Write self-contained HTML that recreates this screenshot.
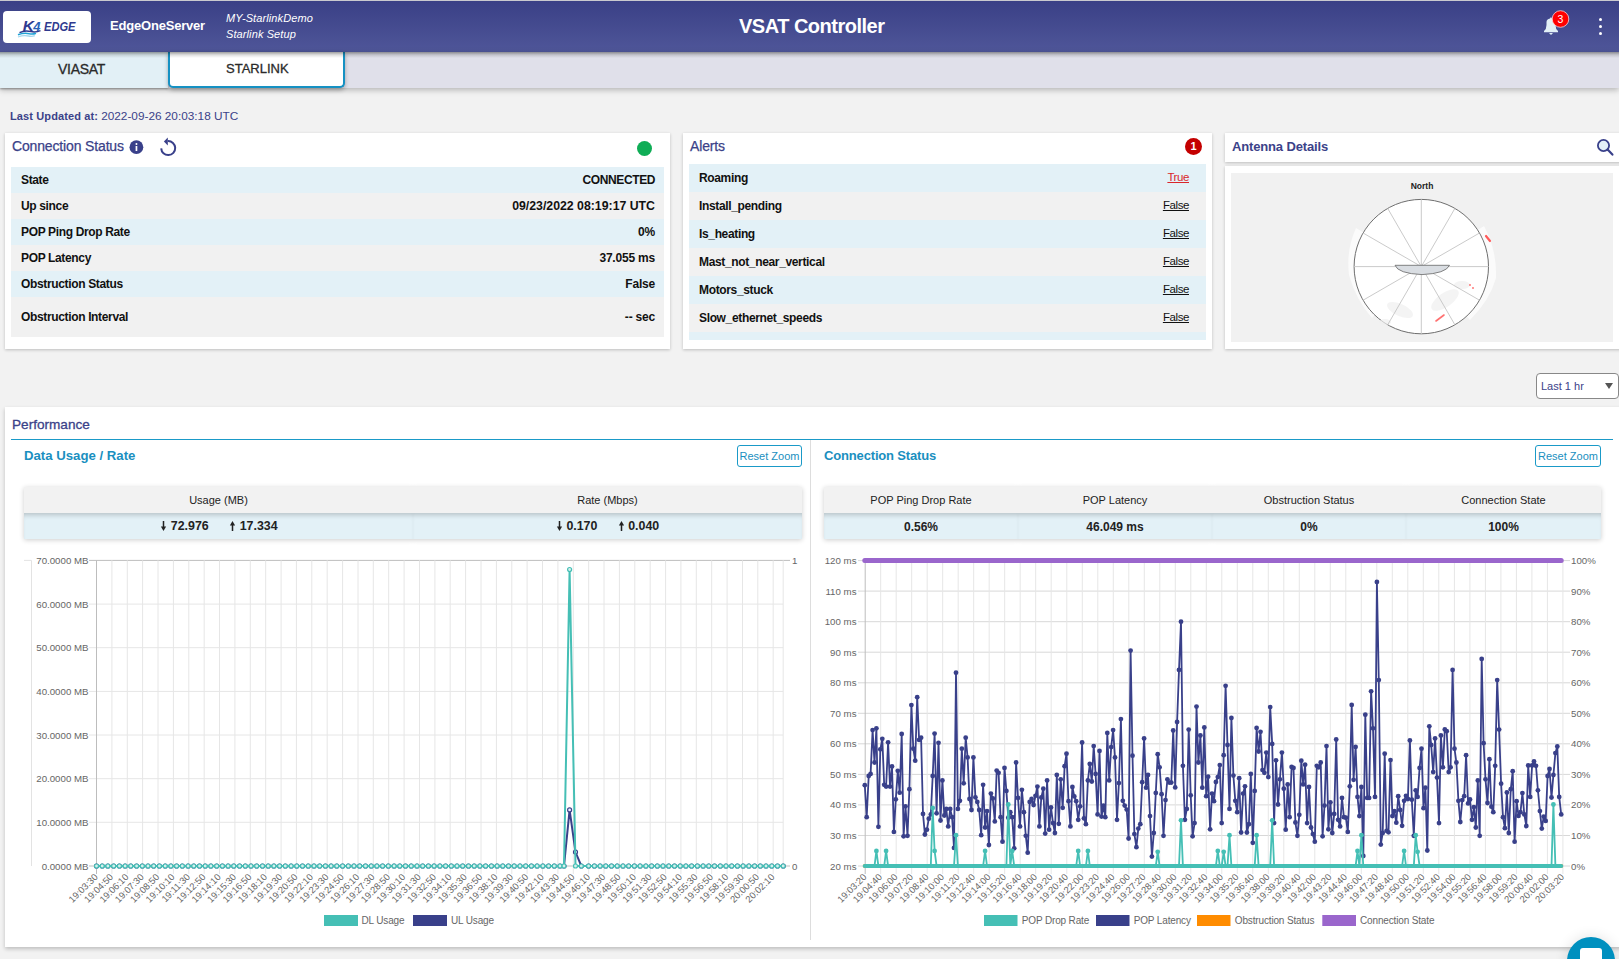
<!DOCTYPE html>
<html><head><meta charset="utf-8">
<style>
*{box-sizing:border-box;margin:0;padding:0}
html,body{width:1619px;height:959px;overflow:hidden;background:#f2f2f2;font-family:"Liberation Sans",sans-serif;position:relative}
.abs{position:absolute}
.t{position:absolute;white-space:nowrap;line-height:1}
#topline{left:0;top:0;width:1619px;height:1px;background:#c9c9cf}
#header{left:0;top:1px;width:1619px;height:51px;background:linear-gradient(#3a4086,#4f5699);}
#logo{left:3px;top:11px;width:88px;height:32px;background:#fff;border-radius:4px}
#tabbar{left:0;top:52px;width:1619px;height:36px;background:#e0e0ea;box-shadow:0 2px 6px rgba(0,0,0,.26)}
#tab1{left:0;top:52px;width:168px;height:36px;background:#e2f0f6;box-shadow:0 1px 2px rgba(0,0,0,.35)}
#tab2{left:168px;top:52px;width:177px;height:36px;background:#fff;border:2px solid #1591c3;border-top:none;border-radius:0 0 5px 5px;box-shadow:0 2px 4px rgba(0,0,0,.3)}
.panel{position:absolute;background:#fff;box-shadow:0 1px 3px rgba(0,0,0,.22)}
.row{position:absolute;left:0;width:100%}
.blue{background:#e3f1f7}
.gray{background:#f1f1f1}
.lbl{position:absolute;left:10px;font-weight:bold;font-size:12px;color:#111;white-space:nowrap;line-height:1;letter-spacing:-0.35px}
.val{position:absolute;right:9px;font-weight:bold;font-size:12px;color:#111;white-space:nowrap;line-height:1;letter-spacing:-0.2px}
.ptitle{position:absolute;font-size:14px;color:#3b4289;white-space:nowrap;line-height:1;letter-spacing:-0.15px;-webkit-text-stroke:0.25px #3b4289}
.link{position:absolute;right:17px;font-size:11.5px;color:#111;text-decoration:underline;white-space:nowrap;line-height:1;letter-spacing:-0.4px}
.sumh{position:absolute;background:#f2f2f2;font-size:11px;color:#222;text-align:center;line-height:1}
.sumv{position:absolute;background:#e3f1f7;font-size:12px;color:#222;font-weight:bold;text-align:center;line-height:1;box-shadow:inset 0 5px 5px -3px rgba(0,0,0,.2)}
.sv{font-size:12.4px;font-weight:bold;color:#222}
.rz{position:absolute;border:1px solid #1a9ac8;border-radius:3px;color:#1a8fc0;font-size:11px;text-align:center;line-height:20px;background:#fff}
svg text.ax{font-family:"Liberation Sans",sans-serif;font-size:9.7px;fill:#666}
svg text.lg{font-family:"Liberation Sans",sans-serif;font-size:10px;fill:#666;letter-spacing:-0.15px}
svg text.xl{font-family:"Liberation Sans",sans-serif;font-size:9.4px;fill:#666}
</style></head><body>
<div id="topline" class="abs"></div>
<div id="header" class="abs"></div>
<div id="logo" class="abs"></div>
<div class="t" style="left:110px;top:19px;font-size:13px;font-weight:bold;color:#fff;letter-spacing:-0.2px">EdgeOneServer</div>
<div class="t" style="left:226px;top:13px;font-size:11px;font-style:italic;color:#fff;letter-spacing:0.1px">MY-StarlinkDemo</div>
<div class="t" style="left:226px;top:29px;font-size:11px;font-style:italic;color:#fff;letter-spacing:0.1px">Starlink Setup</div>
<div class="t" style="left:739px;top:16px;font-size:20px;font-weight:bold;color:#fff;letter-spacing:-0.5px">VSAT Controller</div>

<div id="tabbar" class="abs"></div>
<div id="tab1" class="abs"></div>
<div id="tab2" class="abs"></div>
<div class="abs" style="left:0;top:52px;width:1619px;height:6px;background:linear-gradient(rgba(0,0,0,.38),rgba(0,0,0,.12) 50%,rgba(0,0,0,0))"></div>
<div class="t" style="left:58px;top:61.5px;font-size:14px;letter-spacing:-0.3px;color:#2a2a2a;-webkit-text-stroke:0.3px #2a2a2a">VIASAT</div>
<div class="t" style="left:226px;top:61.5px;font-size:13px;color:#2a2a2a;-webkit-text-stroke:0.3px #2a2a2a">STARLINK</div>

<div class="t" style="left:10px;top:111px;font-size:11px;color:#3b4289"><b style="letter-spacing:0.12px">Last Updated at:</b> <span style="font-size:11.8px">2022-09-26 20:03:18 UTC</span></div>

<!-- Connection status panel -->
<div class="panel" style="left:5px;top:133px;width:665px;height:216px">
  <div class="ptitle" style="left:7px;top:6px">Connection Status</div>
  <div class="abs" style="left:6px;top:34px;width:653px;height:169px">
    <div class="row blue" style="top:0;height:26px"><div class="lbl" style="top:7px">State</div><div class="val" style="top:7px;letter-spacing:-0.4px">CONNECTED</div></div>
    <div class="row gray" style="top:26px;height:26px"><div class="lbl" style="top:7px">Up since</div><div class="val" style="top:7px;font-size:12.3px;letter-spacing:0px">09/23/2022 08:19:17 UTC</div></div>
    <div class="row blue" style="top:52px;height:26px"><div class="lbl" style="top:7px">POP Ping Drop Rate</div><div class="val" style="top:7px">0%</div></div>
    <div class="row gray" style="top:78px;height:26px"><div class="lbl" style="top:7px">POP Latency</div><div class="val" style="top:7px">37.055 ms</div></div>
    <div class="row blue" style="top:104px;height:26px"><div class="lbl" style="top:7px">Obstruction Status</div><div class="val" style="top:7px">False</div></div>
    <div class="row gray" style="top:130px;height:40px"><div class="lbl" style="top:14px">Obstruction Interval</div><div class="val" style="top:14px">-- sec</div></div>
  </div>
</div>

<!-- Alerts panel -->
<div class="panel" style="left:683px;top:133px;width:529px;height:216px">
  <div class="ptitle" style="left:7px;top:6px">Alerts</div>
  <div class="abs" style="left:6px;top:31px;width:517px;height:176px">
    <div class="row blue" style="top:0;height:28px"><div class="lbl" style="top:8px">Roaming</div><div class="link" style="top:8px;color:#d9262b">True</div></div>
    <div class="row gray" style="top:28px;height:28px"><div class="lbl" style="top:8px">Install_pending</div><div class="link" style="top:8px">False</div></div>
    <div class="row blue" style="top:56px;height:28px"><div class="lbl" style="top:8px">Is_heating</div><div class="link" style="top:8px">False</div></div>
    <div class="row gray" style="top:84px;height:28px"><div class="lbl" style="top:8px">Mast_not_near_vertical</div><div class="link" style="top:8px">False</div></div>
    <div class="row blue" style="top:112px;height:28px"><div class="lbl" style="top:8px">Motors_stuck</div><div class="link" style="top:8px">False</div></div>
    <div class="row gray" style="top:140px;height:28px"><div class="lbl" style="top:8px">Slow_ethernet_speeds</div><div class="link" style="top:8px">False</div></div>
    <div class="row blue" style="top:168px;height:8px"></div>
  </div>
</div>

<!-- Antenna -->
<div class="panel" style="left:1225px;top:133px;width:400px;height:29px">
  <div class="ptitle" style="left:7px;top:7px;font-weight:bold;font-size:13px;-webkit-text-stroke:0">Antenna Details</div>
</div>
<div class="panel" style="left:1225px;top:166px;width:400px;height:183px">
  <div class="abs" style="left:6px;top:7px;width:382px;height:169px;background:#f1f1f1"></div>
</div>

<!-- dropdown -->
<div class="abs" style="left:1536px;top:373px;width:83px;height:26px;border:1px solid #888;border-radius:4px;background:#fff"></div>
<div class="t" style="left:1541px;top:381px;font-size:11px;color:#3b4289">Last 1 hr</div>

<!-- Performance -->
<div class="panel" style="left:5px;top:407px;width:1625px;height:540px;box-shadow:0 2px 4px rgba(0,0,0,.22)">
  <div class="t" style="left:7px;top:10.5px;font-size:13.6px;color:#3b4289;-webkit-text-stroke:0.3px #3b4289">Performance</div>
  <div class="abs" style="left:6px;top:32px;width:1602px;height:1px;background:#1a9ac8"></div>
  <div class="abs" style="left:805px;top:33px;width:1px;height:500px;background:#ddd"></div>
  <div class="t" style="left:19px;top:42px;font-size:13.2px;font-weight:bold;color:#1a8fc0">Data Usage / Rate</div>
  <div class="t" style="left:819px;top:42px;font-size:13px;letter-spacing:-0.16px;font-weight:bold;color:#1a8fc0">Connection Status</div>
</div>
<div class="rz" style="left:737px;top:445px;width:65px;height:22px">Reset Zoom</div>
<div class="rz" style="left:1535px;top:445px;width:66px;height:22px">Reset Zoom</div>


<!-- logo -->
<svg class="abs" style="left:3px;top:11px" width="88" height="32" viewBox="0 0 88 32">
  <text x="19.8" y="20.3" font-family="Liberation Sans" font-weight="bold" font-style="italic" font-size="15.5" fill="#2f3a8f" letter-spacing="-1.5">K</text>
  <text x="30.2" y="19.8" font-family="Liberation Sans" font-weight="bold" font-style="italic" font-size="13" fill="#2a64b8">4</text>
  <g transform="translate(41,19.6) scale(0.87,1)"><text x="0" y="0" font-family="Liberation Sans" font-weight="bold" font-style="italic" font-size="12.8" fill="#2f3a8f">EDGE</text></g>
  <path d="M16.5 21.6 Q22 19 28 20.6 Q33 21.6 37.5 19.6" fill="none" stroke="#2f3a8f" stroke-width="1.5"/>
  <path d="M15 23.8 Q21 21.4 26.5 22.8 Q30 23.6 33 22.2" fill="none" stroke="#1fa3d6" stroke-width="1.5"/>
  <path d="M15 26 Q20.5 23.8 25.5 25 Q29 25.8 31.8 24.6" fill="none" stroke="#a5d8ee" stroke-width="1.3"/>
</svg>
<!-- bell -->
<svg class="abs" style="left:1540px;top:8px" width="30" height="30" viewBox="0 0 30 30">
  <path d="M4 24.2 L18 24.2 L18 23 Q15.5 21 15.5 17 L15.5 14 Q15.5 11.5 12 10.6 L11 9 L10 10.6 Q6.5 11.5 6.5 14 L6.5 17 Q6.5 21 4 23 Z" fill="#e2f0f6"/>
  <path d="M9 25 L13 25 L11 27 Z" fill="#e2f0f6"/>
  <circle cx="20.5" cy="11" r="8.3" fill="#f00" stroke="#ffd0d0" stroke-width="0.8"/>
  <text x="20.5" y="14.6" text-anchor="middle" font-family="Liberation Sans" font-size="10.5" fill="#fff">3</text>
</svg>
<div class="abs" style="left:1598.7px;top:17.8px;width:3.6px;height:3.6px;border-radius:50%;background:#fff"></div>
<div class="abs" style="left:1598.7px;top:24.6px;width:3.6px;height:3.6px;border-radius:50%;background:#fff"></div>
<div class="abs" style="left:1598.7px;top:31.5px;width:3.6px;height:3.6px;border-radius:50%;background:#fff"></div>
<!-- info / refresh / dot -->
<svg class="abs" style="left:120px;top:135px" width="70" height="25" viewBox="0 0 70 25">
  <circle cx="16.4" cy="12.2" r="6.9" fill="#39408a"/>
  <rect x="15.6" y="11" width="1.7" height="5" fill="#fff"/>
  <circle cx="16.45" cy="9" r="1" fill="#fff"/>
  <path d="M41.2 13.4 A7 7 0 1 0 47.9 6.1" fill="none" stroke="#39408a" stroke-width="2"/>
  <path d="M43.9 6.5 L47.8 2.4 L47.8 10.6 Z" fill="#39408a"/>
</svg>
<div class="abs" style="left:637px;top:140.5px;width:15px;height:15px;border-radius:50%;background:#0fad56"></div>
<!-- alerts badge -->
<div class="abs" style="left:1185px;top:138.3px;width:17.2px;height:17.2px;border-radius:50%;background:#c40000;color:#fff;font-size:11px;font-weight:bold;text-align:center;line-height:17px">1</div>
<!-- search -->
<svg class="abs" style="left:1594px;top:136px" width="22" height="22" viewBox="0 0 22 22">
  <circle cx="9.5" cy="9.5" r="5.6" fill="#e4f0f8" stroke="#39408a" stroke-width="1.8"/>
  <path d="M13.6 13.6 L18.4 18.6" stroke="#39408a" stroke-width="2.2" stroke-linecap="round"/>
</svg>
<!-- dropdown triangle -->
<div class="abs" style="left:1605px;top:383px;width:0;height:0;border-left:4.3px solid transparent;border-right:4.3px solid transparent;border-top:6px solid #555"></div>
<!-- summary tables -->
<div class="abs" style="left:24px;top:487px;width:389px;height:52px;box-shadow:0 1px 5px rgba(0,0,0,.2)"></div>
<div class="abs" style="left:413px;top:487px;width:389px;height:52px;box-shadow:0 1px 5px rgba(0,0,0,.2)"></div>
<div class="abs" style="left:824px;top:487px;width:194px;height:52px;box-shadow:0 1px 5px rgba(0,0,0,.2)"></div>
<div class="abs" style="left:1018px;top:487px;width:194px;height:52px;box-shadow:0 1px 5px rgba(0,0,0,.2)"></div>
<div class="abs" style="left:1212px;top:487px;width:194px;height:52px;box-shadow:0 1px 5px rgba(0,0,0,.2)"></div>
<div class="abs" style="left:1406px;top:487px;width:195px;height:52px;box-shadow:0 1px 5px rgba(0,0,0,.2)"></div>
<div class="sumh" style="left:24px;top:487px;width:389px;height:26px;padding-top:8px">Usage (MB)</div>
<div class="sumv" style="left:24px;top:513px;width:389px;height:26px"></div>
<div class="sumh" style="left:413px;top:487px;width:389px;height:26px;padding-top:8px">Rate (Mbps)</div>
<div class="sumv" style="left:413px;top:513px;width:389px;height:26px"></div>
<div class="sumh" style="left:824px;top:487px;width:194px;height:26px;padding-top:8px">POP Ping Drop Rate</div>
<div class="sumv" style="left:824px;top:513px;width:194px;height:26px;padding-top:7.5px">0.56%</div>
<div class="sumh" style="left:1018px;top:487px;width:194px;height:26px;padding-top:8px">POP Latency</div>
<div class="sumv" style="left:1018px;top:513px;width:194px;height:26px;padding-top:7.5px">46.049 ms</div>
<div class="sumh" style="left:1212px;top:487px;width:194px;height:26px;padding-top:8px">Obstruction Status</div>
<div class="sumv" style="left:1212px;top:513px;width:194px;height:26px;padding-top:7.5px">0%</div>
<div class="sumh" style="left:1406px;top:487px;width:195px;height:26px;padding-top:8px">Connection State</div>
<div class="sumv" style="left:1406px;top:513px;width:195px;height:26px;padding-top:7.5px">100%</div>
<svg class="abs" style="left:159.5px;top:521px" width="7" height="10" viewBox="0 0 7 10"><rect x="2.75" y="0" width="1.5" height="6.5" fill="#222"/><path d="M0.9 5.6 L6.1 5.6 L3.5 10 Z" fill="#222"/></svg><div class="t sv" style="left:170.8px;top:520px">72.976</div>
<svg class="abs" style="left:228.5px;top:521px" width="7" height="10" viewBox="0 0 7 10"><rect x="2.75" y="3.5" width="1.5" height="6.5" fill="#222"/><path d="M0.9 4.4 L6.1 4.4 L3.5 0 Z" fill="#222"/></svg><div class="t sv" style="left:239.7px;top:520px">17.334</div>
<svg class="abs" style="left:555.5px;top:521px" width="7" height="10" viewBox="0 0 7 10"><rect x="2.75" y="0" width="1.5" height="6.5" fill="#222"/><path d="M0.9 5.6 L6.1 5.6 L3.5 10 Z" fill="#222"/></svg><div class="t sv" style="left:566.4px;top:520px">0.170</div>
<svg class="abs" style="left:617.5px;top:521px" width="7" height="10" viewBox="0 0 7 10"><rect x="2.75" y="3.5" width="1.5" height="6.5" fill="#222"/><path d="M0.9 4.4 L6.1 4.4 L3.5 0 Z" fill="#222"/></svg><div class="t sv" style="left:628.2px;top:520px">0.040</div>
<!-- antenna polar -->
<svg class="abs" style="left:1231px;top:173px" width="382" height="169" viewBox="1231 173 382 169">
  <text x="1422" y="189" text-anchor="middle" font-family="Liberation Sans" font-weight="bold" font-size="8.5" fill="#222">North</text>
  <path d="M1356 228 Q1346 250 1349 275 Q1356 300 1372 318 L1421 266 Z" fill="#fbfbfb"/><path d="M1484 226 Q1497 250 1496 278 Q1490 300 1470 320 L1421 266 Z" fill="#fbfbfb"/>
  <circle cx="1421.3" cy="266.6" r="67.2" fill="#fff" stroke="#6e6e6e" stroke-width="1"/>
  <g fill="#f0f0f0" opacity="0.7"><ellipse cx="1400" cy="310" rx="14" ry="6" transform="rotate(25 1400 310)"/><ellipse cx="1445" cy="300" rx="16" ry="7" transform="rotate(-35 1445 300)"/><ellipse cx="1462" cy="285" rx="8" ry="4"/><ellipse cx="1385" cy="322" rx="6" ry="3"/></g><g stroke="#c4c4c4" stroke-width="0.9">
    <line x1="1421.3" y1="266.6" x2="1421.3" y2="199.4"/><line x1="1421.3" y1="266.6" x2="1454.9" y2="208.4"/><line x1="1421.3" y1="266.6" x2="1479.5" y2="233.0"/><line x1="1421.3" y1="266.6" x2="1488.5" y2="266.6"/><line x1="1421.3" y1="266.6" x2="1479.5" y2="300.2"/><line x1="1421.3" y1="266.6" x2="1454.9" y2="324.8"/><line x1="1421.3" y1="266.6" x2="1421.3" y2="333.8"/><line x1="1421.3" y1="266.6" x2="1387.7" y2="324.8"/><line x1="1421.3" y1="266.6" x2="1363.1" y2="300.2"/><line x1="1421.3" y1="266.6" x2="1354.1" y2="266.6"/><line x1="1421.3" y1="266.6" x2="1363.1" y2="233.0"/><line x1="1421.3" y1="266.6" x2="1387.7" y2="208.4"/>
  </g>
  <path d="M1395 265.3 L1449.5 265.3 Q1446 273.5 1422 274.6 Q1398 273.5 1395 265.3 Z" fill="#d9dde2" stroke="#666" stroke-width="0.8"/>
  <path d="M1486 236 L1490 241" stroke="#ff5a5a" stroke-width="2.2" stroke-linecap="round"/>
  <path d="M1436 321 L1444 315" stroke="#ff7070" stroke-width="1.6" stroke-linecap="round"/>
  <circle cx="1470" cy="285" r="0.9" fill="#ff6a6a"/><circle cx="1473" cy="288" r="0.9" fill="#ff6a6a"/>
</svg>
<!-- chat bubble -->
<div class="abs" style="left:1567px;top:937px;width:48px;height:48px;border-radius:50%;background:#0090bf;box-shadow:0 0 14px rgba(0,0,0,.12)"></div>
<div class="abs" style="left:1580px;top:948px;width:22px;height:20px;border-radius:3px;background:#fff"></div>

<svg class="abs" style="left:0;top:0" width="1619" height="959" viewBox="0 0 1619 959"><line x1="31.5" y1="560.4" x2="31.5" y2="866.0" stroke="#e3e3e3" stroke-width="1"/><line x1="24" y1="560.4" x2="31.5" y2="560.4" stroke="#e3e3e3" stroke-width="1"/><line x1="89" y1="560.4" x2="790" y2="560.4" stroke="#bdbdbd" stroke-width="1"/><text x="88.5" y="563.9" text-anchor="end" class="ax">70.0000 MB</text><line x1="89" y1="604.1" x2="783.2" y2="604.1" stroke="#e6e6e6" stroke-width="1"/><text x="88.5" y="607.6" text-anchor="end" class="ax">60.0000 MB</text><line x1="89" y1="647.7" x2="783.2" y2="647.7" stroke="#e6e6e6" stroke-width="1"/><text x="88.5" y="651.2" text-anchor="end" class="ax">50.0000 MB</text><line x1="89" y1="691.4" x2="783.2" y2="691.4" stroke="#e6e6e6" stroke-width="1"/><text x="88.5" y="694.9" text-anchor="end" class="ax">40.0000 MB</text><line x1="89" y1="735.0" x2="783.2" y2="735.0" stroke="#e6e6e6" stroke-width="1"/><text x="88.5" y="738.5" text-anchor="end" class="ax">30.0000 MB</text><line x1="89" y1="778.7" x2="783.2" y2="778.7" stroke="#e6e6e6" stroke-width="1"/><text x="88.5" y="782.2" text-anchor="end" class="ax">20.0000 MB</text><line x1="89" y1="822.3" x2="783.2" y2="822.3" stroke="#e6e6e6" stroke-width="1"/><text x="88.5" y="825.8" text-anchor="end" class="ax">10.0000 MB</text><line x1="89" y1="866.0" x2="790" y2="866.0" stroke="#bdbdbd" stroke-width="1"/><text x="88.5" y="869.5" text-anchor="end" class="ax">0.0000 MB</text><text x="792" y="563.9" class="ax">1</text><text x="792" y="869.5" class="ax">0</text><text transform="translate(98.4,877.5) rotate(-45)" text-anchor="end" class="xl">19:03:30</text><line x1="111.9" y1="560.4" x2="111.9" y2="874" stroke="#e6e6e6" stroke-width="1"/><text transform="translate(113.8,877.5) rotate(-45)" text-anchor="end" class="xl">19:04:50</text><line x1="127.3" y1="560.4" x2="127.3" y2="874" stroke="#e6e6e6" stroke-width="1"/><text transform="translate(129.2,877.5) rotate(-45)" text-anchor="end" class="xl">19:06:10</text><line x1="142.6" y1="560.4" x2="142.6" y2="874" stroke="#e6e6e6" stroke-width="1"/><text transform="translate(144.5,877.5) rotate(-45)" text-anchor="end" class="xl">19:07:30</text><line x1="158.0" y1="560.4" x2="158.0" y2="874" stroke="#e6e6e6" stroke-width="1"/><text transform="translate(159.9,877.5) rotate(-45)" text-anchor="end" class="xl">19:08:50</text><line x1="173.4" y1="560.4" x2="173.4" y2="874" stroke="#e6e6e6" stroke-width="1"/><text transform="translate(175.3,877.5) rotate(-45)" text-anchor="end" class="xl">19:10:10</text><line x1="188.8" y1="560.4" x2="188.8" y2="874" stroke="#e6e6e6" stroke-width="1"/><text transform="translate(190.7,877.5) rotate(-45)" text-anchor="end" class="xl">19:11:30</text><line x1="204.2" y1="560.4" x2="204.2" y2="874" stroke="#e6e6e6" stroke-width="1"/><text transform="translate(206.1,877.5) rotate(-45)" text-anchor="end" class="xl">19:12:50</text><line x1="219.5" y1="560.4" x2="219.5" y2="874" stroke="#e6e6e6" stroke-width="1"/><text transform="translate(221.4,877.5) rotate(-45)" text-anchor="end" class="xl">19:14:10</text><line x1="234.9" y1="560.4" x2="234.9" y2="874" stroke="#e6e6e6" stroke-width="1"/><text transform="translate(236.8,877.5) rotate(-45)" text-anchor="end" class="xl">19:15:30</text><line x1="250.3" y1="560.4" x2="250.3" y2="874" stroke="#e6e6e6" stroke-width="1"/><text transform="translate(252.2,877.5) rotate(-45)" text-anchor="end" class="xl">19:16:50</text><line x1="265.7" y1="560.4" x2="265.7" y2="874" stroke="#e6e6e6" stroke-width="1"/><text transform="translate(267.6,877.5) rotate(-45)" text-anchor="end" class="xl">19:18:10</text><line x1="281.1" y1="560.4" x2="281.1" y2="874" stroke="#e6e6e6" stroke-width="1"/><text transform="translate(283.0,877.5) rotate(-45)" text-anchor="end" class="xl">19:19:30</text><line x1="296.4" y1="560.4" x2="296.4" y2="874" stroke="#e6e6e6" stroke-width="1"/><text transform="translate(298.3,877.5) rotate(-45)" text-anchor="end" class="xl">19:20:50</text><line x1="311.8" y1="560.4" x2="311.8" y2="874" stroke="#e6e6e6" stroke-width="1"/><text transform="translate(313.7,877.5) rotate(-45)" text-anchor="end" class="xl">19:22:10</text><line x1="327.2" y1="560.4" x2="327.2" y2="874" stroke="#e6e6e6" stroke-width="1"/><text transform="translate(329.1,877.5) rotate(-45)" text-anchor="end" class="xl">19:23:30</text><line x1="342.6" y1="560.4" x2="342.6" y2="874" stroke="#e6e6e6" stroke-width="1"/><text transform="translate(344.5,877.5) rotate(-45)" text-anchor="end" class="xl">19:24:50</text><line x1="358.0" y1="560.4" x2="358.0" y2="874" stroke="#e6e6e6" stroke-width="1"/><text transform="translate(359.9,877.5) rotate(-45)" text-anchor="end" class="xl">19:26:10</text><line x1="373.3" y1="560.4" x2="373.3" y2="874" stroke="#e6e6e6" stroke-width="1"/><text transform="translate(375.2,877.5) rotate(-45)" text-anchor="end" class="xl">19:27:30</text><line x1="388.7" y1="560.4" x2="388.7" y2="874" stroke="#e6e6e6" stroke-width="1"/><text transform="translate(390.6,877.5) rotate(-45)" text-anchor="end" class="xl">19:28:50</text><line x1="404.1" y1="560.4" x2="404.1" y2="874" stroke="#e6e6e6" stroke-width="1"/><text transform="translate(406.0,877.5) rotate(-45)" text-anchor="end" class="xl">19:30:10</text><line x1="419.5" y1="560.4" x2="419.5" y2="874" stroke="#e6e6e6" stroke-width="1"/><text transform="translate(421.4,877.5) rotate(-45)" text-anchor="end" class="xl">19:31:30</text><line x1="434.9" y1="560.4" x2="434.9" y2="874" stroke="#e6e6e6" stroke-width="1"/><text transform="translate(436.8,877.5) rotate(-45)" text-anchor="end" class="xl">19:32:50</text><line x1="450.2" y1="560.4" x2="450.2" y2="874" stroke="#e6e6e6" stroke-width="1"/><text transform="translate(452.1,877.5) rotate(-45)" text-anchor="end" class="xl">19:34:10</text><line x1="465.6" y1="560.4" x2="465.6" y2="874" stroke="#e6e6e6" stroke-width="1"/><text transform="translate(467.5,877.5) rotate(-45)" text-anchor="end" class="xl">19:35:30</text><line x1="481.0" y1="560.4" x2="481.0" y2="874" stroke="#e6e6e6" stroke-width="1"/><text transform="translate(482.9,877.5) rotate(-45)" text-anchor="end" class="xl">19:36:50</text><line x1="496.4" y1="560.4" x2="496.4" y2="874" stroke="#e6e6e6" stroke-width="1"/><text transform="translate(498.3,877.5) rotate(-45)" text-anchor="end" class="xl">19:38:10</text><line x1="511.8" y1="560.4" x2="511.8" y2="874" stroke="#e6e6e6" stroke-width="1"/><text transform="translate(513.7,877.5) rotate(-45)" text-anchor="end" class="xl">19:39:30</text><line x1="527.1" y1="560.4" x2="527.1" y2="874" stroke="#e6e6e6" stroke-width="1"/><text transform="translate(529.0,877.5) rotate(-45)" text-anchor="end" class="xl">19:40:50</text><line x1="542.5" y1="560.4" x2="542.5" y2="874" stroke="#e6e6e6" stroke-width="1"/><text transform="translate(544.4,877.5) rotate(-45)" text-anchor="end" class="xl">19:42:10</text><line x1="557.9" y1="560.4" x2="557.9" y2="874" stroke="#e6e6e6" stroke-width="1"/><text transform="translate(559.8,877.5) rotate(-45)" text-anchor="end" class="xl">19:43:30</text><line x1="573.3" y1="560.4" x2="573.3" y2="874" stroke="#e6e6e6" stroke-width="1"/><text transform="translate(575.2,877.5) rotate(-45)" text-anchor="end" class="xl">19:44:50</text><line x1="588.7" y1="560.4" x2="588.7" y2="874" stroke="#e6e6e6" stroke-width="1"/><text transform="translate(590.6,877.5) rotate(-45)" text-anchor="end" class="xl">19:46:10</text><line x1="604.0" y1="560.4" x2="604.0" y2="874" stroke="#e6e6e6" stroke-width="1"/><text transform="translate(605.9,877.5) rotate(-45)" text-anchor="end" class="xl">19:47:30</text><line x1="619.4" y1="560.4" x2="619.4" y2="874" stroke="#e6e6e6" stroke-width="1"/><text transform="translate(621.3,877.5) rotate(-45)" text-anchor="end" class="xl">19:48:50</text><line x1="634.8" y1="560.4" x2="634.8" y2="874" stroke="#e6e6e6" stroke-width="1"/><text transform="translate(636.7,877.5) rotate(-45)" text-anchor="end" class="xl">19:50:10</text><line x1="650.2" y1="560.4" x2="650.2" y2="874" stroke="#e6e6e6" stroke-width="1"/><text transform="translate(652.1,877.5) rotate(-45)" text-anchor="end" class="xl">19:51:30</text><line x1="665.6" y1="560.4" x2="665.6" y2="874" stroke="#e6e6e6" stroke-width="1"/><text transform="translate(667.5,877.5) rotate(-45)" text-anchor="end" class="xl">19:52:50</text><line x1="680.9" y1="560.4" x2="680.9" y2="874" stroke="#e6e6e6" stroke-width="1"/><text transform="translate(682.8,877.5) rotate(-45)" text-anchor="end" class="xl">19:54:10</text><line x1="696.3" y1="560.4" x2="696.3" y2="874" stroke="#e6e6e6" stroke-width="1"/><text transform="translate(698.2,877.5) rotate(-45)" text-anchor="end" class="xl">19:55:30</text><line x1="711.7" y1="560.4" x2="711.7" y2="874" stroke="#e6e6e6" stroke-width="1"/><text transform="translate(713.6,877.5) rotate(-45)" text-anchor="end" class="xl">19:56:50</text><line x1="727.1" y1="560.4" x2="727.1" y2="874" stroke="#e6e6e6" stroke-width="1"/><text transform="translate(729.0,877.5) rotate(-45)" text-anchor="end" class="xl">19:58:10</text><line x1="742.5" y1="560.4" x2="742.5" y2="874" stroke="#e6e6e6" stroke-width="1"/><text transform="translate(744.4,877.5) rotate(-45)" text-anchor="end" class="xl">19:59:30</text><line x1="757.8" y1="560.4" x2="757.8" y2="874" stroke="#e6e6e6" stroke-width="1"/><text transform="translate(759.7,877.5) rotate(-45)" text-anchor="end" class="xl">20:00:50</text><line x1="773.2" y1="560.4" x2="773.2" y2="874" stroke="#e6e6e6" stroke-width="1"/><text transform="translate(775.1,877.5) rotate(-45)" text-anchor="end" class="xl">20:02:10</text><line x1="96.5" y1="560.4" x2="96.5" y2="874" stroke="#bdbdbd" stroke-width="1"/><line x1="783.2" y1="560.4" x2="783.2" y2="866.0" stroke="#e6e6e6" stroke-width="1"/><polyline fill="none" stroke="#39408a" stroke-width="2" points="96.5,866.0 102.2,866.0 107.9,866.0 113.7,866.0 119.4,866.0 125.1,866.0 130.8,866.0 136.6,866.0 142.3,866.0 148.0,866.0 153.7,866.0 159.4,866.0 165.2,866.0 170.9,866.0 176.6,866.0 182.3,866.0 188.1,866.0 193.8,866.0 199.5,866.0 205.2,866.0 210.9,866.0 216.7,866.0 222.4,866.0 228.1,866.0 233.8,866.0 239.6,866.0 245.3,866.0 251.0,866.0 256.7,866.0 262.5,866.0 268.2,866.0 273.9,866.0 279.6,866.0 285.3,866.0 291.1,866.0 296.8,866.0 302.5,866.0 308.2,866.0 314.0,866.0 319.7,866.0 325.4,866.0 331.1,866.0 336.8,866.0 342.6,866.0 348.3,866.0 354.0,866.0 359.7,866.0 365.5,866.0 371.2,866.0 376.9,866.0 382.6,866.0 388.3,866.0 394.1,866.0 399.8,866.0 405.5,866.0 411.2,866.0 417.0,866.0 422.7,866.0 428.4,866.0 434.1,866.0 439.9,866.0 445.6,866.0 451.3,866.0 457.0,866.0 462.7,866.0 468.5,866.0 474.2,866.0 479.9,866.0 485.6,866.0 491.4,866.0 497.1,866.0 502.8,866.0 508.5,866.0 514.2,866.0 520.0,866.0 525.7,866.0 531.4,866.0 537.1,866.0 542.9,866.0 548.6,866.0 554.3,866.0 560.0,866.0 564.0,866.0 569.6,809.9 575.5,852.1 581.3,866.0 588.6,866.0 594.4,866.0 600.1,866.0 605.8,866.0 611.5,866.0 617.2,866.0 623.0,866.0 628.7,866.0 634.4,866.0 640.1,866.0 645.9,866.0 651.6,866.0 657.3,866.0 663.0,866.0 668.8,866.0 674.5,866.0 680.2,866.0 685.9,866.0 691.6,866.0 697.4,866.0 703.1,866.0 708.8,866.0 714.5,866.0 720.3,866.0 726.0,866.0 731.7,866.0 737.4,866.0 743.1,866.0 748.9,866.0 754.6,866.0 760.3,866.0 766.0,866.0 771.8,866.0 777.5,866.0 783.2,866.0"/><circle cx="96.5" cy="866.0" r="2" fill="#eef" stroke="#39408a" stroke-width="1.2"/><circle cx="102.2" cy="866.0" r="2" fill="#eef" stroke="#39408a" stroke-width="1.2"/><circle cx="107.9" cy="866.0" r="2" fill="#eef" stroke="#39408a" stroke-width="1.2"/><circle cx="113.7" cy="866.0" r="2" fill="#eef" stroke="#39408a" stroke-width="1.2"/><circle cx="119.4" cy="866.0" r="2" fill="#eef" stroke="#39408a" stroke-width="1.2"/><circle cx="125.1" cy="866.0" r="2" fill="#eef" stroke="#39408a" stroke-width="1.2"/><circle cx="130.8" cy="866.0" r="2" fill="#eef" stroke="#39408a" stroke-width="1.2"/><circle cx="136.6" cy="866.0" r="2" fill="#eef" stroke="#39408a" stroke-width="1.2"/><circle cx="142.3" cy="866.0" r="2" fill="#eef" stroke="#39408a" stroke-width="1.2"/><circle cx="148.0" cy="866.0" r="2" fill="#eef" stroke="#39408a" stroke-width="1.2"/><circle cx="153.7" cy="866.0" r="2" fill="#eef" stroke="#39408a" stroke-width="1.2"/><circle cx="159.4" cy="866.0" r="2" fill="#eef" stroke="#39408a" stroke-width="1.2"/><circle cx="165.2" cy="866.0" r="2" fill="#eef" stroke="#39408a" stroke-width="1.2"/><circle cx="170.9" cy="866.0" r="2" fill="#eef" stroke="#39408a" stroke-width="1.2"/><circle cx="176.6" cy="866.0" r="2" fill="#eef" stroke="#39408a" stroke-width="1.2"/><circle cx="182.3" cy="866.0" r="2" fill="#eef" stroke="#39408a" stroke-width="1.2"/><circle cx="188.1" cy="866.0" r="2" fill="#eef" stroke="#39408a" stroke-width="1.2"/><circle cx="193.8" cy="866.0" r="2" fill="#eef" stroke="#39408a" stroke-width="1.2"/><circle cx="199.5" cy="866.0" r="2" fill="#eef" stroke="#39408a" stroke-width="1.2"/><circle cx="205.2" cy="866.0" r="2" fill="#eef" stroke="#39408a" stroke-width="1.2"/><circle cx="210.9" cy="866.0" r="2" fill="#eef" stroke="#39408a" stroke-width="1.2"/><circle cx="216.7" cy="866.0" r="2" fill="#eef" stroke="#39408a" stroke-width="1.2"/><circle cx="222.4" cy="866.0" r="2" fill="#eef" stroke="#39408a" stroke-width="1.2"/><circle cx="228.1" cy="866.0" r="2" fill="#eef" stroke="#39408a" stroke-width="1.2"/><circle cx="233.8" cy="866.0" r="2" fill="#eef" stroke="#39408a" stroke-width="1.2"/><circle cx="239.6" cy="866.0" r="2" fill="#eef" stroke="#39408a" stroke-width="1.2"/><circle cx="245.3" cy="866.0" r="2" fill="#eef" stroke="#39408a" stroke-width="1.2"/><circle cx="251.0" cy="866.0" r="2" fill="#eef" stroke="#39408a" stroke-width="1.2"/><circle cx="256.7" cy="866.0" r="2" fill="#eef" stroke="#39408a" stroke-width="1.2"/><circle cx="262.5" cy="866.0" r="2" fill="#eef" stroke="#39408a" stroke-width="1.2"/><circle cx="268.2" cy="866.0" r="2" fill="#eef" stroke="#39408a" stroke-width="1.2"/><circle cx="273.9" cy="866.0" r="2" fill="#eef" stroke="#39408a" stroke-width="1.2"/><circle cx="279.6" cy="866.0" r="2" fill="#eef" stroke="#39408a" stroke-width="1.2"/><circle cx="285.3" cy="866.0" r="2" fill="#eef" stroke="#39408a" stroke-width="1.2"/><circle cx="291.1" cy="866.0" r="2" fill="#eef" stroke="#39408a" stroke-width="1.2"/><circle cx="296.8" cy="866.0" r="2" fill="#eef" stroke="#39408a" stroke-width="1.2"/><circle cx="302.5" cy="866.0" r="2" fill="#eef" stroke="#39408a" stroke-width="1.2"/><circle cx="308.2" cy="866.0" r="2" fill="#eef" stroke="#39408a" stroke-width="1.2"/><circle cx="314.0" cy="866.0" r="2" fill="#eef" stroke="#39408a" stroke-width="1.2"/><circle cx="319.7" cy="866.0" r="2" fill="#eef" stroke="#39408a" stroke-width="1.2"/><circle cx="325.4" cy="866.0" r="2" fill="#eef" stroke="#39408a" stroke-width="1.2"/><circle cx="331.1" cy="866.0" r="2" fill="#eef" stroke="#39408a" stroke-width="1.2"/><circle cx="336.8" cy="866.0" r="2" fill="#eef" stroke="#39408a" stroke-width="1.2"/><circle cx="342.6" cy="866.0" r="2" fill="#eef" stroke="#39408a" stroke-width="1.2"/><circle cx="348.3" cy="866.0" r="2" fill="#eef" stroke="#39408a" stroke-width="1.2"/><circle cx="354.0" cy="866.0" r="2" fill="#eef" stroke="#39408a" stroke-width="1.2"/><circle cx="359.7" cy="866.0" r="2" fill="#eef" stroke="#39408a" stroke-width="1.2"/><circle cx="365.5" cy="866.0" r="2" fill="#eef" stroke="#39408a" stroke-width="1.2"/><circle cx="371.2" cy="866.0" r="2" fill="#eef" stroke="#39408a" stroke-width="1.2"/><circle cx="376.9" cy="866.0" r="2" fill="#eef" stroke="#39408a" stroke-width="1.2"/><circle cx="382.6" cy="866.0" r="2" fill="#eef" stroke="#39408a" stroke-width="1.2"/><circle cx="388.3" cy="866.0" r="2" fill="#eef" stroke="#39408a" stroke-width="1.2"/><circle cx="394.1" cy="866.0" r="2" fill="#eef" stroke="#39408a" stroke-width="1.2"/><circle cx="399.8" cy="866.0" r="2" fill="#eef" stroke="#39408a" stroke-width="1.2"/><circle cx="405.5" cy="866.0" r="2" fill="#eef" stroke="#39408a" stroke-width="1.2"/><circle cx="411.2" cy="866.0" r="2" fill="#eef" stroke="#39408a" stroke-width="1.2"/><circle cx="417.0" cy="866.0" r="2" fill="#eef" stroke="#39408a" stroke-width="1.2"/><circle cx="422.7" cy="866.0" r="2" fill="#eef" stroke="#39408a" stroke-width="1.2"/><circle cx="428.4" cy="866.0" r="2" fill="#eef" stroke="#39408a" stroke-width="1.2"/><circle cx="434.1" cy="866.0" r="2" fill="#eef" stroke="#39408a" stroke-width="1.2"/><circle cx="439.9" cy="866.0" r="2" fill="#eef" stroke="#39408a" stroke-width="1.2"/><circle cx="445.6" cy="866.0" r="2" fill="#eef" stroke="#39408a" stroke-width="1.2"/><circle cx="451.3" cy="866.0" r="2" fill="#eef" stroke="#39408a" stroke-width="1.2"/><circle cx="457.0" cy="866.0" r="2" fill="#eef" stroke="#39408a" stroke-width="1.2"/><circle cx="462.7" cy="866.0" r="2" fill="#eef" stroke="#39408a" stroke-width="1.2"/><circle cx="468.5" cy="866.0" r="2" fill="#eef" stroke="#39408a" stroke-width="1.2"/><circle cx="474.2" cy="866.0" r="2" fill="#eef" stroke="#39408a" stroke-width="1.2"/><circle cx="479.9" cy="866.0" r="2" fill="#eef" stroke="#39408a" stroke-width="1.2"/><circle cx="485.6" cy="866.0" r="2" fill="#eef" stroke="#39408a" stroke-width="1.2"/><circle cx="491.4" cy="866.0" r="2" fill="#eef" stroke="#39408a" stroke-width="1.2"/><circle cx="497.1" cy="866.0" r="2" fill="#eef" stroke="#39408a" stroke-width="1.2"/><circle cx="502.8" cy="866.0" r="2" fill="#eef" stroke="#39408a" stroke-width="1.2"/><circle cx="508.5" cy="866.0" r="2" fill="#eef" stroke="#39408a" stroke-width="1.2"/><circle cx="514.2" cy="866.0" r="2" fill="#eef" stroke="#39408a" stroke-width="1.2"/><circle cx="520.0" cy="866.0" r="2" fill="#eef" stroke="#39408a" stroke-width="1.2"/><circle cx="525.7" cy="866.0" r="2" fill="#eef" stroke="#39408a" stroke-width="1.2"/><circle cx="531.4" cy="866.0" r="2" fill="#eef" stroke="#39408a" stroke-width="1.2"/><circle cx="537.1" cy="866.0" r="2" fill="#eef" stroke="#39408a" stroke-width="1.2"/><circle cx="542.9" cy="866.0" r="2" fill="#eef" stroke="#39408a" stroke-width="1.2"/><circle cx="548.6" cy="866.0" r="2" fill="#eef" stroke="#39408a" stroke-width="1.2"/><circle cx="554.3" cy="866.0" r="2" fill="#eef" stroke="#39408a" stroke-width="1.2"/><circle cx="560.0" cy="866.0" r="2" fill="#eef" stroke="#39408a" stroke-width="1.2"/><circle cx="564.0" cy="866.0" r="2" fill="#eef" stroke="#39408a" stroke-width="1.2"/><circle cx="569.6" cy="809.9" r="2" fill="#eef" stroke="#39408a" stroke-width="1.2"/><circle cx="575.5" cy="852.1" r="2" fill="#eef" stroke="#39408a" stroke-width="1.2"/><circle cx="581.3" cy="866.0" r="2" fill="#eef" stroke="#39408a" stroke-width="1.2"/><circle cx="588.6" cy="866.0" r="2" fill="#eef" stroke="#39408a" stroke-width="1.2"/><circle cx="594.4" cy="866.0" r="2" fill="#eef" stroke="#39408a" stroke-width="1.2"/><circle cx="600.1" cy="866.0" r="2" fill="#eef" stroke="#39408a" stroke-width="1.2"/><circle cx="605.8" cy="866.0" r="2" fill="#eef" stroke="#39408a" stroke-width="1.2"/><circle cx="611.5" cy="866.0" r="2" fill="#eef" stroke="#39408a" stroke-width="1.2"/><circle cx="617.2" cy="866.0" r="2" fill="#eef" stroke="#39408a" stroke-width="1.2"/><circle cx="623.0" cy="866.0" r="2" fill="#eef" stroke="#39408a" stroke-width="1.2"/><circle cx="628.7" cy="866.0" r="2" fill="#eef" stroke="#39408a" stroke-width="1.2"/><circle cx="634.4" cy="866.0" r="2" fill="#eef" stroke="#39408a" stroke-width="1.2"/><circle cx="640.1" cy="866.0" r="2" fill="#eef" stroke="#39408a" stroke-width="1.2"/><circle cx="645.9" cy="866.0" r="2" fill="#eef" stroke="#39408a" stroke-width="1.2"/><circle cx="651.6" cy="866.0" r="2" fill="#eef" stroke="#39408a" stroke-width="1.2"/><circle cx="657.3" cy="866.0" r="2" fill="#eef" stroke="#39408a" stroke-width="1.2"/><circle cx="663.0" cy="866.0" r="2" fill="#eef" stroke="#39408a" stroke-width="1.2"/><circle cx="668.8" cy="866.0" r="2" fill="#eef" stroke="#39408a" stroke-width="1.2"/><circle cx="674.5" cy="866.0" r="2" fill="#eef" stroke="#39408a" stroke-width="1.2"/><circle cx="680.2" cy="866.0" r="2" fill="#eef" stroke="#39408a" stroke-width="1.2"/><circle cx="685.9" cy="866.0" r="2" fill="#eef" stroke="#39408a" stroke-width="1.2"/><circle cx="691.6" cy="866.0" r="2" fill="#eef" stroke="#39408a" stroke-width="1.2"/><circle cx="697.4" cy="866.0" r="2" fill="#eef" stroke="#39408a" stroke-width="1.2"/><circle cx="703.1" cy="866.0" r="2" fill="#eef" stroke="#39408a" stroke-width="1.2"/><circle cx="708.8" cy="866.0" r="2" fill="#eef" stroke="#39408a" stroke-width="1.2"/><circle cx="714.5" cy="866.0" r="2" fill="#eef" stroke="#39408a" stroke-width="1.2"/><circle cx="720.3" cy="866.0" r="2" fill="#eef" stroke="#39408a" stroke-width="1.2"/><circle cx="726.0" cy="866.0" r="2" fill="#eef" stroke="#39408a" stroke-width="1.2"/><circle cx="731.7" cy="866.0" r="2" fill="#eef" stroke="#39408a" stroke-width="1.2"/><circle cx="737.4" cy="866.0" r="2" fill="#eef" stroke="#39408a" stroke-width="1.2"/><circle cx="743.1" cy="866.0" r="2" fill="#eef" stroke="#39408a" stroke-width="1.2"/><circle cx="748.9" cy="866.0" r="2" fill="#eef" stroke="#39408a" stroke-width="1.2"/><circle cx="754.6" cy="866.0" r="2" fill="#eef" stroke="#39408a" stroke-width="1.2"/><circle cx="760.3" cy="866.0" r="2" fill="#eef" stroke="#39408a" stroke-width="1.2"/><circle cx="766.0" cy="866.0" r="2" fill="#eef" stroke="#39408a" stroke-width="1.2"/><circle cx="771.8" cy="866.0" r="2" fill="#eef" stroke="#39408a" stroke-width="1.2"/><circle cx="777.5" cy="866.0" r="2" fill="#eef" stroke="#39408a" stroke-width="1.2"/><circle cx="783.2" cy="866.0" r="2" fill="#eef" stroke="#39408a" stroke-width="1.2"/><polyline fill="none" stroke="#45bfb5" stroke-width="2" points="96.5,866.0 102.2,866.0 107.9,866.0 113.7,866.0 119.4,866.0 125.1,866.0 130.8,866.0 136.6,866.0 142.3,866.0 148.0,866.0 153.7,866.0 159.4,866.0 165.2,866.0 170.9,866.0 176.6,866.0 182.3,866.0 188.1,866.0 193.8,866.0 199.5,866.0 205.2,866.0 210.9,866.0 216.7,866.0 222.4,866.0 228.1,866.0 233.8,866.0 239.6,866.0 245.3,866.0 251.0,866.0 256.7,866.0 262.5,866.0 268.2,866.0 273.9,866.0 279.6,866.0 285.3,866.0 291.1,866.0 296.8,866.0 302.5,866.0 308.2,866.0 314.0,866.0 319.7,866.0 325.4,866.0 331.1,866.0 336.8,866.0 342.6,866.0 348.3,866.0 354.0,866.0 359.7,866.0 365.5,866.0 371.2,866.0 376.9,866.0 382.6,866.0 388.3,866.0 394.1,866.0 399.8,866.0 405.5,866.0 411.2,866.0 417.0,866.0 422.7,866.0 428.4,866.0 434.1,866.0 439.9,866.0 445.6,866.0 451.3,866.0 457.0,866.0 462.7,866.0 468.5,866.0 474.2,866.0 479.9,866.0 485.6,866.0 491.4,866.0 497.1,866.0 502.8,866.0 508.5,866.0 514.2,866.0 520.0,866.0 525.7,866.0 531.4,866.0 537.1,866.0 542.9,866.0 548.6,866.0 554.3,866.0 560.0,866.0 564.0,866.0 569.6,569.5 575.5,866.0 581.3,866.0 588.6,866.0 594.4,866.0 600.1,866.0 605.8,866.0 611.5,866.0 617.2,866.0 623.0,866.0 628.7,866.0 634.4,866.0 640.1,866.0 645.9,866.0 651.6,866.0 657.3,866.0 663.0,866.0 668.8,866.0 674.5,866.0 680.2,866.0 685.9,866.0 691.6,866.0 697.4,866.0 703.1,866.0 708.8,866.0 714.5,866.0 720.3,866.0 726.0,866.0 731.7,866.0 737.4,866.0 743.1,866.0 748.9,866.0 754.6,866.0 760.3,866.0 766.0,866.0 771.8,866.0 777.5,866.0 783.2,866.0"/><circle cx="96.5" cy="866.0" r="2" fill="#d5f0ee" stroke="#45bfb5" stroke-width="1.2"/><circle cx="102.2" cy="866.0" r="2" fill="#d5f0ee" stroke="#45bfb5" stroke-width="1.2"/><circle cx="107.9" cy="866.0" r="2" fill="#d5f0ee" stroke="#45bfb5" stroke-width="1.2"/><circle cx="113.7" cy="866.0" r="2" fill="#d5f0ee" stroke="#45bfb5" stroke-width="1.2"/><circle cx="119.4" cy="866.0" r="2" fill="#d5f0ee" stroke="#45bfb5" stroke-width="1.2"/><circle cx="125.1" cy="866.0" r="2" fill="#d5f0ee" stroke="#45bfb5" stroke-width="1.2"/><circle cx="130.8" cy="866.0" r="2" fill="#d5f0ee" stroke="#45bfb5" stroke-width="1.2"/><circle cx="136.6" cy="866.0" r="2" fill="#d5f0ee" stroke="#45bfb5" stroke-width="1.2"/><circle cx="142.3" cy="866.0" r="2" fill="#d5f0ee" stroke="#45bfb5" stroke-width="1.2"/><circle cx="148.0" cy="866.0" r="2" fill="#d5f0ee" stroke="#45bfb5" stroke-width="1.2"/><circle cx="153.7" cy="866.0" r="2" fill="#d5f0ee" stroke="#45bfb5" stroke-width="1.2"/><circle cx="159.4" cy="866.0" r="2" fill="#d5f0ee" stroke="#45bfb5" stroke-width="1.2"/><circle cx="165.2" cy="866.0" r="2" fill="#d5f0ee" stroke="#45bfb5" stroke-width="1.2"/><circle cx="170.9" cy="866.0" r="2" fill="#d5f0ee" stroke="#45bfb5" stroke-width="1.2"/><circle cx="176.6" cy="866.0" r="2" fill="#d5f0ee" stroke="#45bfb5" stroke-width="1.2"/><circle cx="182.3" cy="866.0" r="2" fill="#d5f0ee" stroke="#45bfb5" stroke-width="1.2"/><circle cx="188.1" cy="866.0" r="2" fill="#d5f0ee" stroke="#45bfb5" stroke-width="1.2"/><circle cx="193.8" cy="866.0" r="2" fill="#d5f0ee" stroke="#45bfb5" stroke-width="1.2"/><circle cx="199.5" cy="866.0" r="2" fill="#d5f0ee" stroke="#45bfb5" stroke-width="1.2"/><circle cx="205.2" cy="866.0" r="2" fill="#d5f0ee" stroke="#45bfb5" stroke-width="1.2"/><circle cx="210.9" cy="866.0" r="2" fill="#d5f0ee" stroke="#45bfb5" stroke-width="1.2"/><circle cx="216.7" cy="866.0" r="2" fill="#d5f0ee" stroke="#45bfb5" stroke-width="1.2"/><circle cx="222.4" cy="866.0" r="2" fill="#d5f0ee" stroke="#45bfb5" stroke-width="1.2"/><circle cx="228.1" cy="866.0" r="2" fill="#d5f0ee" stroke="#45bfb5" stroke-width="1.2"/><circle cx="233.8" cy="866.0" r="2" fill="#d5f0ee" stroke="#45bfb5" stroke-width="1.2"/><circle cx="239.6" cy="866.0" r="2" fill="#d5f0ee" stroke="#45bfb5" stroke-width="1.2"/><circle cx="245.3" cy="866.0" r="2" fill="#d5f0ee" stroke="#45bfb5" stroke-width="1.2"/><circle cx="251.0" cy="866.0" r="2" fill="#d5f0ee" stroke="#45bfb5" stroke-width="1.2"/><circle cx="256.7" cy="866.0" r="2" fill="#d5f0ee" stroke="#45bfb5" stroke-width="1.2"/><circle cx="262.5" cy="866.0" r="2" fill="#d5f0ee" stroke="#45bfb5" stroke-width="1.2"/><circle cx="268.2" cy="866.0" r="2" fill="#d5f0ee" stroke="#45bfb5" stroke-width="1.2"/><circle cx="273.9" cy="866.0" r="2" fill="#d5f0ee" stroke="#45bfb5" stroke-width="1.2"/><circle cx="279.6" cy="866.0" r="2" fill="#d5f0ee" stroke="#45bfb5" stroke-width="1.2"/><circle cx="285.3" cy="866.0" r="2" fill="#d5f0ee" stroke="#45bfb5" stroke-width="1.2"/><circle cx="291.1" cy="866.0" r="2" fill="#d5f0ee" stroke="#45bfb5" stroke-width="1.2"/><circle cx="296.8" cy="866.0" r="2" fill="#d5f0ee" stroke="#45bfb5" stroke-width="1.2"/><circle cx="302.5" cy="866.0" r="2" fill="#d5f0ee" stroke="#45bfb5" stroke-width="1.2"/><circle cx="308.2" cy="866.0" r="2" fill="#d5f0ee" stroke="#45bfb5" stroke-width="1.2"/><circle cx="314.0" cy="866.0" r="2" fill="#d5f0ee" stroke="#45bfb5" stroke-width="1.2"/><circle cx="319.7" cy="866.0" r="2" fill="#d5f0ee" stroke="#45bfb5" stroke-width="1.2"/><circle cx="325.4" cy="866.0" r="2" fill="#d5f0ee" stroke="#45bfb5" stroke-width="1.2"/><circle cx="331.1" cy="866.0" r="2" fill="#d5f0ee" stroke="#45bfb5" stroke-width="1.2"/><circle cx="336.8" cy="866.0" r="2" fill="#d5f0ee" stroke="#45bfb5" stroke-width="1.2"/><circle cx="342.6" cy="866.0" r="2" fill="#d5f0ee" stroke="#45bfb5" stroke-width="1.2"/><circle cx="348.3" cy="866.0" r="2" fill="#d5f0ee" stroke="#45bfb5" stroke-width="1.2"/><circle cx="354.0" cy="866.0" r="2" fill="#d5f0ee" stroke="#45bfb5" stroke-width="1.2"/><circle cx="359.7" cy="866.0" r="2" fill="#d5f0ee" stroke="#45bfb5" stroke-width="1.2"/><circle cx="365.5" cy="866.0" r="2" fill="#d5f0ee" stroke="#45bfb5" stroke-width="1.2"/><circle cx="371.2" cy="866.0" r="2" fill="#d5f0ee" stroke="#45bfb5" stroke-width="1.2"/><circle cx="376.9" cy="866.0" r="2" fill="#d5f0ee" stroke="#45bfb5" stroke-width="1.2"/><circle cx="382.6" cy="866.0" r="2" fill="#d5f0ee" stroke="#45bfb5" stroke-width="1.2"/><circle cx="388.3" cy="866.0" r="2" fill="#d5f0ee" stroke="#45bfb5" stroke-width="1.2"/><circle cx="394.1" cy="866.0" r="2" fill="#d5f0ee" stroke="#45bfb5" stroke-width="1.2"/><circle cx="399.8" cy="866.0" r="2" fill="#d5f0ee" stroke="#45bfb5" stroke-width="1.2"/><circle cx="405.5" cy="866.0" r="2" fill="#d5f0ee" stroke="#45bfb5" stroke-width="1.2"/><circle cx="411.2" cy="866.0" r="2" fill="#d5f0ee" stroke="#45bfb5" stroke-width="1.2"/><circle cx="417.0" cy="866.0" r="2" fill="#d5f0ee" stroke="#45bfb5" stroke-width="1.2"/><circle cx="422.7" cy="866.0" r="2" fill="#d5f0ee" stroke="#45bfb5" stroke-width="1.2"/><circle cx="428.4" cy="866.0" r="2" fill="#d5f0ee" stroke="#45bfb5" stroke-width="1.2"/><circle cx="434.1" cy="866.0" r="2" fill="#d5f0ee" stroke="#45bfb5" stroke-width="1.2"/><circle cx="439.9" cy="866.0" r="2" fill="#d5f0ee" stroke="#45bfb5" stroke-width="1.2"/><circle cx="445.6" cy="866.0" r="2" fill="#d5f0ee" stroke="#45bfb5" stroke-width="1.2"/><circle cx="451.3" cy="866.0" r="2" fill="#d5f0ee" stroke="#45bfb5" stroke-width="1.2"/><circle cx="457.0" cy="866.0" r="2" fill="#d5f0ee" stroke="#45bfb5" stroke-width="1.2"/><circle cx="462.7" cy="866.0" r="2" fill="#d5f0ee" stroke="#45bfb5" stroke-width="1.2"/><circle cx="468.5" cy="866.0" r="2" fill="#d5f0ee" stroke="#45bfb5" stroke-width="1.2"/><circle cx="474.2" cy="866.0" r="2" fill="#d5f0ee" stroke="#45bfb5" stroke-width="1.2"/><circle cx="479.9" cy="866.0" r="2" fill="#d5f0ee" stroke="#45bfb5" stroke-width="1.2"/><circle cx="485.6" cy="866.0" r="2" fill="#d5f0ee" stroke="#45bfb5" stroke-width="1.2"/><circle cx="491.4" cy="866.0" r="2" fill="#d5f0ee" stroke="#45bfb5" stroke-width="1.2"/><circle cx="497.1" cy="866.0" r="2" fill="#d5f0ee" stroke="#45bfb5" stroke-width="1.2"/><circle cx="502.8" cy="866.0" r="2" fill="#d5f0ee" stroke="#45bfb5" stroke-width="1.2"/><circle cx="508.5" cy="866.0" r="2" fill="#d5f0ee" stroke="#45bfb5" stroke-width="1.2"/><circle cx="514.2" cy="866.0" r="2" fill="#d5f0ee" stroke="#45bfb5" stroke-width="1.2"/><circle cx="520.0" cy="866.0" r="2" fill="#d5f0ee" stroke="#45bfb5" stroke-width="1.2"/><circle cx="525.7" cy="866.0" r="2" fill="#d5f0ee" stroke="#45bfb5" stroke-width="1.2"/><circle cx="531.4" cy="866.0" r="2" fill="#d5f0ee" stroke="#45bfb5" stroke-width="1.2"/><circle cx="537.1" cy="866.0" r="2" fill="#d5f0ee" stroke="#45bfb5" stroke-width="1.2"/><circle cx="542.9" cy="866.0" r="2" fill="#d5f0ee" stroke="#45bfb5" stroke-width="1.2"/><circle cx="548.6" cy="866.0" r="2" fill="#d5f0ee" stroke="#45bfb5" stroke-width="1.2"/><circle cx="554.3" cy="866.0" r="2" fill="#d5f0ee" stroke="#45bfb5" stroke-width="1.2"/><circle cx="560.0" cy="866.0" r="2" fill="#d5f0ee" stroke="#45bfb5" stroke-width="1.2"/><circle cx="564.0" cy="866.0" r="2" fill="#d5f0ee" stroke="#45bfb5" stroke-width="1.2"/><circle cx="569.6" cy="569.5" r="2" fill="#d5f0ee" stroke="#45bfb5" stroke-width="1.2"/><circle cx="575.5" cy="866.0" r="2" fill="#d5f0ee" stroke="#45bfb5" stroke-width="1.2"/><circle cx="581.3" cy="866.0" r="2" fill="#d5f0ee" stroke="#45bfb5" stroke-width="1.2"/><circle cx="588.6" cy="866.0" r="2" fill="#d5f0ee" stroke="#45bfb5" stroke-width="1.2"/><circle cx="594.4" cy="866.0" r="2" fill="#d5f0ee" stroke="#45bfb5" stroke-width="1.2"/><circle cx="600.1" cy="866.0" r="2" fill="#d5f0ee" stroke="#45bfb5" stroke-width="1.2"/><circle cx="605.8" cy="866.0" r="2" fill="#d5f0ee" stroke="#45bfb5" stroke-width="1.2"/><circle cx="611.5" cy="866.0" r="2" fill="#d5f0ee" stroke="#45bfb5" stroke-width="1.2"/><circle cx="617.2" cy="866.0" r="2" fill="#d5f0ee" stroke="#45bfb5" stroke-width="1.2"/><circle cx="623.0" cy="866.0" r="2" fill="#d5f0ee" stroke="#45bfb5" stroke-width="1.2"/><circle cx="628.7" cy="866.0" r="2" fill="#d5f0ee" stroke="#45bfb5" stroke-width="1.2"/><circle cx="634.4" cy="866.0" r="2" fill="#d5f0ee" stroke="#45bfb5" stroke-width="1.2"/><circle cx="640.1" cy="866.0" r="2" fill="#d5f0ee" stroke="#45bfb5" stroke-width="1.2"/><circle cx="645.9" cy="866.0" r="2" fill="#d5f0ee" stroke="#45bfb5" stroke-width="1.2"/><circle cx="651.6" cy="866.0" r="2" fill="#d5f0ee" stroke="#45bfb5" stroke-width="1.2"/><circle cx="657.3" cy="866.0" r="2" fill="#d5f0ee" stroke="#45bfb5" stroke-width="1.2"/><circle cx="663.0" cy="866.0" r="2" fill="#d5f0ee" stroke="#45bfb5" stroke-width="1.2"/><circle cx="668.8" cy="866.0" r="2" fill="#d5f0ee" stroke="#45bfb5" stroke-width="1.2"/><circle cx="674.5" cy="866.0" r="2" fill="#d5f0ee" stroke="#45bfb5" stroke-width="1.2"/><circle cx="680.2" cy="866.0" r="2" fill="#d5f0ee" stroke="#45bfb5" stroke-width="1.2"/><circle cx="685.9" cy="866.0" r="2" fill="#d5f0ee" stroke="#45bfb5" stroke-width="1.2"/><circle cx="691.6" cy="866.0" r="2" fill="#d5f0ee" stroke="#45bfb5" stroke-width="1.2"/><circle cx="697.4" cy="866.0" r="2" fill="#d5f0ee" stroke="#45bfb5" stroke-width="1.2"/><circle cx="703.1" cy="866.0" r="2" fill="#d5f0ee" stroke="#45bfb5" stroke-width="1.2"/><circle cx="708.8" cy="866.0" r="2" fill="#d5f0ee" stroke="#45bfb5" stroke-width="1.2"/><circle cx="714.5" cy="866.0" r="2" fill="#d5f0ee" stroke="#45bfb5" stroke-width="1.2"/><circle cx="720.3" cy="866.0" r="2" fill="#d5f0ee" stroke="#45bfb5" stroke-width="1.2"/><circle cx="726.0" cy="866.0" r="2" fill="#d5f0ee" stroke="#45bfb5" stroke-width="1.2"/><circle cx="731.7" cy="866.0" r="2" fill="#d5f0ee" stroke="#45bfb5" stroke-width="1.2"/><circle cx="737.4" cy="866.0" r="2" fill="#d5f0ee" stroke="#45bfb5" stroke-width="1.2"/><circle cx="743.1" cy="866.0" r="2" fill="#d5f0ee" stroke="#45bfb5" stroke-width="1.2"/><circle cx="748.9" cy="866.0" r="2" fill="#d5f0ee" stroke="#45bfb5" stroke-width="1.2"/><circle cx="754.6" cy="866.0" r="2" fill="#d5f0ee" stroke="#45bfb5" stroke-width="1.2"/><circle cx="760.3" cy="866.0" r="2" fill="#d5f0ee" stroke="#45bfb5" stroke-width="1.2"/><circle cx="766.0" cy="866.0" r="2" fill="#d5f0ee" stroke="#45bfb5" stroke-width="1.2"/><circle cx="771.8" cy="866.0" r="2" fill="#d5f0ee" stroke="#45bfb5" stroke-width="1.2"/><circle cx="777.5" cy="866.0" r="2" fill="#d5f0ee" stroke="#45bfb5" stroke-width="1.2"/><circle cx="783.2" cy="866.0" r="2" fill="#d5f0ee" stroke="#45bfb5" stroke-width="1.2"/><rect x="324" y="915" width="34" height="11" fill="#45bfb5"/><text x="361.5" y="924" class="lg">DL Usage</text><rect x="413" y="915" width="34" height="11" fill="#39408a"/><text x="451" y="924" class="lg">UL Usage</text><line x1="858" y1="560.6" x2="1570" y2="560.6" stroke="#d8d8d8" stroke-width="1"/><text x="856.5" y="564.1" text-anchor="end" class="ax">120 ms</text><text x="1571" y="564.1" class="ax">100%</text><line x1="858" y1="591.1" x2="1570" y2="591.1" stroke="#d8d8d8" stroke-width="1"/><text x="856.5" y="594.6" text-anchor="end" class="ax">110 ms</text><text x="1571" y="594.6" class="ax">90%</text><line x1="858" y1="621.7" x2="1570" y2="621.7" stroke="#d8d8d8" stroke-width="1"/><text x="856.5" y="625.2" text-anchor="end" class="ax">100 ms</text><text x="1571" y="625.2" class="ax">80%</text><line x1="858" y1="652.2" x2="1570" y2="652.2" stroke="#d8d8d8" stroke-width="1"/><text x="856.5" y="655.7" text-anchor="end" class="ax">90 ms</text><text x="1571" y="655.7" class="ax">70%</text><line x1="858" y1="682.8" x2="1570" y2="682.8" stroke="#d8d8d8" stroke-width="1"/><text x="856.5" y="686.3" text-anchor="end" class="ax">80 ms</text><text x="1571" y="686.3" class="ax">60%</text><line x1="858" y1="713.3" x2="1570" y2="713.3" stroke="#d8d8d8" stroke-width="1"/><text x="856.5" y="716.8" text-anchor="end" class="ax">70 ms</text><text x="1571" y="716.8" class="ax">50%</text><line x1="858" y1="743.8" x2="1570" y2="743.8" stroke="#d8d8d8" stroke-width="1"/><text x="856.5" y="747.3" text-anchor="end" class="ax">60 ms</text><text x="1571" y="747.3" class="ax">40%</text><line x1="858" y1="774.4" x2="1570" y2="774.4" stroke="#d8d8d8" stroke-width="1"/><text x="856.5" y="777.9" text-anchor="end" class="ax">50 ms</text><text x="1571" y="777.9" class="ax">30%</text><line x1="858" y1="804.9" x2="1570" y2="804.9" stroke="#d8d8d8" stroke-width="1"/><text x="856.5" y="808.4" text-anchor="end" class="ax">40 ms</text><text x="1571" y="808.4" class="ax">20%</text><line x1="858" y1="835.5" x2="1570" y2="835.5" stroke="#d8d8d8" stroke-width="1"/><text x="856.5" y="839.0" text-anchor="end" class="ax">30 ms</text><text x="1571" y="839.0" class="ax">10%</text><line x1="858" y1="866.0" x2="1570" y2="866.0" stroke="#d8d8d8" stroke-width="1"/><text x="856.5" y="869.5" text-anchor="end" class="ax">20 ms</text><text x="1571" y="869.5" class="ax">0%</text><text transform="translate(867.1,877.5) rotate(-45)" text-anchor="end" class="xl">19:03:20</text><line x1="880.7" y1="560.6" x2="880.7" y2="874" stroke="#e6e6e6" stroke-width="1"/><text transform="translate(882.6,877.5) rotate(-45)" text-anchor="end" class="xl">19:04:40</text><line x1="896.2" y1="560.6" x2="896.2" y2="874" stroke="#e6e6e6" stroke-width="1"/><text transform="translate(898.1,877.5) rotate(-45)" text-anchor="end" class="xl">19:06:00</text><line x1="911.7" y1="560.6" x2="911.7" y2="874" stroke="#e6e6e6" stroke-width="1"/><text transform="translate(913.6,877.5) rotate(-45)" text-anchor="end" class="xl">19:07:20</text><line x1="927.2" y1="560.6" x2="927.2" y2="874" stroke="#e6e6e6" stroke-width="1"/><text transform="translate(929.1,877.5) rotate(-45)" text-anchor="end" class="xl">19:08:40</text><line x1="942.7" y1="560.6" x2="942.7" y2="874" stroke="#e6e6e6" stroke-width="1"/><text transform="translate(944.6,877.5) rotate(-45)" text-anchor="end" class="xl">19:10:00</text><line x1="958.2" y1="560.6" x2="958.2" y2="874" stroke="#e6e6e6" stroke-width="1"/><text transform="translate(960.1,877.5) rotate(-45)" text-anchor="end" class="xl">19:11:20</text><line x1="973.7" y1="560.6" x2="973.7" y2="874" stroke="#e6e6e6" stroke-width="1"/><text transform="translate(975.6,877.5) rotate(-45)" text-anchor="end" class="xl">19:12:40</text><line x1="989.2" y1="560.6" x2="989.2" y2="874" stroke="#e6e6e6" stroke-width="1"/><text transform="translate(991.1,877.5) rotate(-45)" text-anchor="end" class="xl">19:14:00</text><line x1="1004.7" y1="560.6" x2="1004.7" y2="874" stroke="#e6e6e6" stroke-width="1"/><text transform="translate(1006.6,877.5) rotate(-45)" text-anchor="end" class="xl">19:15:20</text><line x1="1020.2" y1="560.6" x2="1020.2" y2="874" stroke="#e6e6e6" stroke-width="1"/><text transform="translate(1022.1,877.5) rotate(-45)" text-anchor="end" class="xl">19:16:40</text><line x1="1035.7" y1="560.6" x2="1035.7" y2="874" stroke="#e6e6e6" stroke-width="1"/><text transform="translate(1037.6,877.5) rotate(-45)" text-anchor="end" class="xl">19:18:00</text><line x1="1051.2" y1="560.6" x2="1051.2" y2="874" stroke="#e6e6e6" stroke-width="1"/><text transform="translate(1053.1,877.5) rotate(-45)" text-anchor="end" class="xl">19:19:20</text><line x1="1066.8" y1="560.6" x2="1066.8" y2="874" stroke="#e6e6e6" stroke-width="1"/><text transform="translate(1068.7,877.5) rotate(-45)" text-anchor="end" class="xl">19:20:40</text><line x1="1082.3" y1="560.6" x2="1082.3" y2="874" stroke="#e6e6e6" stroke-width="1"/><text transform="translate(1084.2,877.5) rotate(-45)" text-anchor="end" class="xl">19:22:00</text><line x1="1097.8" y1="560.6" x2="1097.8" y2="874" stroke="#e6e6e6" stroke-width="1"/><text transform="translate(1099.7,877.5) rotate(-45)" text-anchor="end" class="xl">19:23:20</text><line x1="1113.3" y1="560.6" x2="1113.3" y2="874" stroke="#e6e6e6" stroke-width="1"/><text transform="translate(1115.2,877.5) rotate(-45)" text-anchor="end" class="xl">19:24:40</text><line x1="1128.8" y1="560.6" x2="1128.8" y2="874" stroke="#e6e6e6" stroke-width="1"/><text transform="translate(1130.7,877.5) rotate(-45)" text-anchor="end" class="xl">19:26:00</text><line x1="1144.3" y1="560.6" x2="1144.3" y2="874" stroke="#e6e6e6" stroke-width="1"/><text transform="translate(1146.2,877.5) rotate(-45)" text-anchor="end" class="xl">19:27:20</text><line x1="1159.8" y1="560.6" x2="1159.8" y2="874" stroke="#e6e6e6" stroke-width="1"/><text transform="translate(1161.7,877.5) rotate(-45)" text-anchor="end" class="xl">19:28:40</text><line x1="1175.3" y1="560.6" x2="1175.3" y2="874" stroke="#e6e6e6" stroke-width="1"/><text transform="translate(1177.2,877.5) rotate(-45)" text-anchor="end" class="xl">19:30:00</text><line x1="1190.8" y1="560.6" x2="1190.8" y2="874" stroke="#e6e6e6" stroke-width="1"/><text transform="translate(1192.7,877.5) rotate(-45)" text-anchor="end" class="xl">19:31:20</text><line x1="1206.3" y1="560.6" x2="1206.3" y2="874" stroke="#e6e6e6" stroke-width="1"/><text transform="translate(1208.2,877.5) rotate(-45)" text-anchor="end" class="xl">19:32:40</text><line x1="1221.8" y1="560.6" x2="1221.8" y2="874" stroke="#e6e6e6" stroke-width="1"/><text transform="translate(1223.7,877.5) rotate(-45)" text-anchor="end" class="xl">19:34:00</text><line x1="1237.3" y1="560.6" x2="1237.3" y2="874" stroke="#e6e6e6" stroke-width="1"/><text transform="translate(1239.2,877.5) rotate(-45)" text-anchor="end" class="xl">19:35:20</text><line x1="1252.8" y1="560.6" x2="1252.8" y2="874" stroke="#e6e6e6" stroke-width="1"/><text transform="translate(1254.7,877.5) rotate(-45)" text-anchor="end" class="xl">19:36:40</text><line x1="1268.3" y1="560.6" x2="1268.3" y2="874" stroke="#e6e6e6" stroke-width="1"/><text transform="translate(1270.2,877.5) rotate(-45)" text-anchor="end" class="xl">19:38:00</text><line x1="1283.8" y1="560.6" x2="1283.8" y2="874" stroke="#e6e6e6" stroke-width="1"/><text transform="translate(1285.7,877.5) rotate(-45)" text-anchor="end" class="xl">19:39:20</text><line x1="1299.3" y1="560.6" x2="1299.3" y2="874" stroke="#e6e6e6" stroke-width="1"/><text transform="translate(1301.2,877.5) rotate(-45)" text-anchor="end" class="xl">19:40:40</text><line x1="1314.8" y1="560.6" x2="1314.8" y2="874" stroke="#e6e6e6" stroke-width="1"/><text transform="translate(1316.7,877.5) rotate(-45)" text-anchor="end" class="xl">19:42:00</text><line x1="1330.3" y1="560.6" x2="1330.3" y2="874" stroke="#e6e6e6" stroke-width="1"/><text transform="translate(1332.2,877.5) rotate(-45)" text-anchor="end" class="xl">19:43:20</text><line x1="1345.8" y1="560.6" x2="1345.8" y2="874" stroke="#e6e6e6" stroke-width="1"/><text transform="translate(1347.7,877.5) rotate(-45)" text-anchor="end" class="xl">19:44:40</text><line x1="1361.3" y1="560.6" x2="1361.3" y2="874" stroke="#e6e6e6" stroke-width="1"/><text transform="translate(1363.2,877.5) rotate(-45)" text-anchor="end" class="xl">19:46:00</text><line x1="1376.8" y1="560.6" x2="1376.8" y2="874" stroke="#e6e6e6" stroke-width="1"/><text transform="translate(1378.7,877.5) rotate(-45)" text-anchor="end" class="xl">19:47:20</text><line x1="1392.3" y1="560.6" x2="1392.3" y2="874" stroke="#e6e6e6" stroke-width="1"/><text transform="translate(1394.2,877.5) rotate(-45)" text-anchor="end" class="xl">19:48:40</text><line x1="1407.8" y1="560.6" x2="1407.8" y2="874" stroke="#e6e6e6" stroke-width="1"/><text transform="translate(1409.7,877.5) rotate(-45)" text-anchor="end" class="xl">19:50:00</text><line x1="1423.3" y1="560.6" x2="1423.3" y2="874" stroke="#e6e6e6" stroke-width="1"/><text transform="translate(1425.2,877.5) rotate(-45)" text-anchor="end" class="xl">19:51:20</text><line x1="1438.8" y1="560.6" x2="1438.8" y2="874" stroke="#e6e6e6" stroke-width="1"/><text transform="translate(1440.7,877.5) rotate(-45)" text-anchor="end" class="xl">19:52:40</text><line x1="1454.4" y1="560.6" x2="1454.4" y2="874" stroke="#e6e6e6" stroke-width="1"/><text transform="translate(1456.3,877.5) rotate(-45)" text-anchor="end" class="xl">19:54:00</text><line x1="1469.9" y1="560.6" x2="1469.9" y2="874" stroke="#e6e6e6" stroke-width="1"/><text transform="translate(1471.8,877.5) rotate(-45)" text-anchor="end" class="xl">19:55:20</text><line x1="1485.4" y1="560.6" x2="1485.4" y2="874" stroke="#e6e6e6" stroke-width="1"/><text transform="translate(1487.3,877.5) rotate(-45)" text-anchor="end" class="xl">19:56:40</text><line x1="1500.9" y1="560.6" x2="1500.9" y2="874" stroke="#e6e6e6" stroke-width="1"/><text transform="translate(1502.8,877.5) rotate(-45)" text-anchor="end" class="xl">19:58:00</text><line x1="1516.4" y1="560.6" x2="1516.4" y2="874" stroke="#e6e6e6" stroke-width="1"/><text transform="translate(1518.3,877.5) rotate(-45)" text-anchor="end" class="xl">19:59:20</text><line x1="1531.9" y1="560.6" x2="1531.9" y2="874" stroke="#e6e6e6" stroke-width="1"/><text transform="translate(1533.8,877.5) rotate(-45)" text-anchor="end" class="xl">20:00:40</text><line x1="1547.4" y1="560.6" x2="1547.4" y2="874" stroke="#e6e6e6" stroke-width="1"/><text transform="translate(1549.3,877.5) rotate(-45)" text-anchor="end" class="xl">20:02:00</text><text transform="translate(1564.8,877.5) rotate(-45)" text-anchor="end" class="xl">20:03:20</text><line x1="865.2" y1="560.6" x2="865.2" y2="874" stroke="#bdbdbd" stroke-width="1"/><line x1="1562.9" y1="560.6" x2="1562.9" y2="874" stroke="#e6e6e6" stroke-width="1"/><line x1="864.8" y1="560.6" x2="1561.2" y2="560.6" stroke="#9a66cc" stroke-width="5" stroke-linecap="round"/><line x1="864.8" y1="866.0" x2="1561.2" y2="866.0" stroke="#ff8c00" stroke-width="4" stroke-linecap="round"/><polyline fill="none" stroke="#39408a" stroke-width="1.8" stroke-linejoin="round" points="864.8,785.2 866.7,817.2 868.7,776.0 870.6,773.9 872.6,730.1 874.5,762.5 876.4,728.3 878.4,826.8 880.3,749.3 882.3,738.8 884.2,784.8 886.1,786.6 888.1,742.3 890.0,786.6 892.0,766.4 893.9,831.9 895.8,799.3 897.8,770.8 899.7,792.7 901.7,734.0 903.6,836.3 905.5,806.3 907.5,835.8 909.4,789.2 911.4,705.1 913.3,748.7 915.2,760.7 917.2,697.2 919.1,739.9 921.1,737.7 923.0,813.9 924.9,834.5 926.9,829.7 928.8,818.7 930.8,814.4 932.7,776.0 934.6,733.6 936.6,813.3 938.5,742.8 940.5,820.5 942.4,780.4 944.3,815.5 946.3,808.9 948.2,826.4 950.2,808.9 952.1,817.2 954.0,847.9 956.0,672.7 957.9,808.9 959.9,800.8 961.8,748.7 963.7,783.3 965.7,737.7 967.6,757.4 969.5,799.0 971.5,810.0 973.4,757.4 975.4,797.3 977.3,801.9 979.2,810.0 981.2,835.2 983.1,784.8 985.1,827.5 987.0,811.1 988.9,845.0 990.9,793.6 992.8,798.4 994.8,821.4 996.7,770.6 998.6,772.8 1000.6,817.2 1002.5,841.7 1004.5,767.9 1006.4,790.9 1008.3,817.7 1010.3,812.2 1012.2,817.2 1014.2,848.3 1016.1,762.5 1018.0,797.9 1020.0,826.4 1021.9,789.8 1023.9,812.2 1025.8,835.8 1027.7,852.7 1029.7,801.9 1031.6,799.0 1033.6,805.0 1035.5,795.8 1037.4,786.6 1039.4,826.4 1041.3,797.5 1043.3,788.7 1045.2,833.6 1047.1,780.4 1049.1,829.7 1051.0,807.4 1053.0,823.1 1054.9,833.0 1056.8,775.0 1058.8,823.8 1060.7,779.3 1062.7,807.8 1064.6,766.2 1066.5,753.7 1068.5,801.2 1070.4,826.4 1072.4,787.0 1074.3,796.4 1076.2,801.2 1078.2,819.8 1080.1,806.3 1082.1,742.5 1084.0,818.3 1085.9,824.2 1087.9,780.4 1089.8,764.0 1091.8,781.5 1093.7,746.1 1095.6,773.9 1097.6,814.4 1099.5,750.9 1101.5,816.6 1103.4,805.6 1105.3,817.2 1107.3,732.9 1109.2,780.4 1111.2,747.1 1113.1,730.1 1115.0,757.4 1117.0,819.8 1118.9,783.1 1120.9,719.1 1122.8,800.8 1124.7,805.6 1126.7,809.6 1128.6,838.5 1130.6,650.6 1132.5,755.7 1134.4,834.1 1136.4,847.2 1138.3,828.6 1140.3,824.2 1142.2,782.2 1144.1,738.4 1146.1,787.7 1148.0,775.0 1150.0,816.1 1151.9,856.6 1153.8,833.0 1155.8,792.9 1157.7,754.2 1159.6,767.3 1161.6,794.2 1163.5,835.8 1165.5,800.1 1167.4,779.3 1169.3,782.6 1171.3,782.6 1173.2,730.5 1175.2,787.4 1177.1,722.0 1179.0,669.9 1181.0,621.7 1182.9,765.8 1184.9,819.8 1186.8,808.9 1188.7,729.6 1190.7,795.3 1192.6,836.3 1194.6,823.1 1196.5,706.6 1198.4,762.5 1200.4,735.5 1202.3,787.7 1204.3,727.4 1206.2,796.2 1208.1,776.7 1210.1,829.3 1212.0,793.6 1214.0,801.2 1215.9,782.0 1217.8,777.1 1219.8,765.1 1221.7,823.1 1223.7,755.2 1225.6,685.8 1227.5,745.0 1229.5,808.9 1231.4,718.0 1233.4,775.6 1235.3,800.8 1237.2,812.2 1239.2,778.2 1241.1,832.5 1243.1,793.6 1245.0,786.3 1246.9,832.5 1248.9,824.2 1250.8,773.9 1252.8,842.8 1254.7,790.9 1256.6,727.9 1258.6,751.5 1260.5,731.8 1262.5,770.1 1264.4,772.8 1266.3,752.6 1268.3,777.1 1270.2,707.1 1272.2,743.9 1274.1,823.1 1276.0,760.3 1278.0,804.5 1279.9,779.3 1281.9,752.6 1283.8,788.7 1285.7,829.7 1287.7,784.4 1289.6,817.2 1291.6,766.9 1293.5,767.9 1295.4,822.5 1297.4,835.8 1299.3,814.8 1301.3,760.7 1303.2,784.4 1305.1,764.7 1307.1,823.1 1309.0,787.0 1311.0,827.5 1312.9,834.1 1314.8,841.7 1316.8,765.8 1318.7,767.3 1320.7,762.5 1322.6,836.3 1324.5,805.6 1326.5,746.1 1328.4,829.3 1330.4,802.3 1332.3,833.0 1334.2,813.9 1336.2,739.5 1338.1,819.8 1340.1,826.4 1342.0,797.9 1343.9,817.2 1345.9,817.7 1347.8,831.9 1349.8,786.3 1351.7,704.9 1353.6,779.8 1355.6,746.9 1357.5,796.9 1359.4,816.1 1361.4,787.0 1363.3,856.0 1365.3,714.7 1367.2,797.9 1369.1,797.9 1371.1,691.3 1373.0,728.3 1375.0,796.9 1376.9,582.0 1378.8,680.1 1380.8,844.6 1382.7,833.0 1384.7,753.7 1386.6,830.8 1388.5,832.3 1390.5,760.1 1392.4,816.1 1394.4,811.1 1396.3,822.7 1398.2,796.2 1400.2,810.0 1402.1,825.8 1404.1,800.8 1406.0,795.8 1407.9,799.0 1409.9,740.4 1411.8,799.7 1413.8,835.8 1415.7,790.3 1417.6,796.9 1419.6,767.9 1421.5,748.7 1423.5,808.2 1425.4,787.7 1427.3,850.5 1429.3,726.3 1431.2,745.0 1433.2,772.1 1435.1,738.4 1437.0,777.6 1439.0,823.1 1440.9,735.5 1442.9,767.3 1444.8,729.4 1446.7,731.2 1448.7,772.1 1450.6,767.3 1452.6,669.9 1454.5,748.7 1456.4,762.5 1458.4,800.8 1460.3,822.0 1462.3,800.1 1464.2,796.2 1466.1,755.2 1468.1,803.4 1470.0,799.5 1472.0,819.8 1473.9,807.1 1475.8,827.5 1477.8,780.4 1479.7,835.8 1481.7,658.9 1483.6,743.2 1485.5,779.3 1487.5,803.0 1489.4,759.2 1491.4,806.7 1493.3,812.2 1495.2,765.8 1497.2,680.1 1499.1,729.6 1501.1,783.7 1503.0,817.2 1504.9,828.2 1506.9,792.5 1508.8,833.0 1510.8,789.2 1512.7,771.2 1514.6,841.7 1516.6,801.2 1518.5,815.9 1520.5,812.2 1522.4,793.1 1524.3,814.4 1526.3,826.0 1528.2,765.5 1530.2,796.9 1532.1,765.5 1534.0,761.4 1536.0,765.8 1537.9,790.3 1539.9,811.1 1541.8,828.6 1543.7,816.6 1545.7,820.9 1547.6,776.0 1549.5,769.0 1551.5,797.5 1553.4,775.0 1555.4,753.1 1557.3,746.5 1559.2,796.9 1561.2,814.4"/><circle cx="864.8" cy="785.2" r="2.4" fill="#39408a"/><circle cx="866.7" cy="817.2" r="2.4" fill="#39408a"/><circle cx="868.7" cy="776.0" r="2.4" fill="#39408a"/><circle cx="870.6" cy="773.9" r="2.4" fill="#39408a"/><circle cx="872.6" cy="730.1" r="2.4" fill="#39408a"/><circle cx="874.5" cy="762.5" r="2.4" fill="#39408a"/><circle cx="876.4" cy="728.3" r="2.4" fill="#39408a"/><circle cx="878.4" cy="826.8" r="2.4" fill="#39408a"/><circle cx="880.3" cy="749.3" r="2.4" fill="#39408a"/><circle cx="882.3" cy="738.8" r="2.4" fill="#39408a"/><circle cx="884.2" cy="784.8" r="2.4" fill="#39408a"/><circle cx="886.1" cy="786.6" r="2.4" fill="#39408a"/><circle cx="888.1" cy="742.3" r="2.4" fill="#39408a"/><circle cx="890.0" cy="786.6" r="2.4" fill="#39408a"/><circle cx="892.0" cy="766.4" r="2.4" fill="#39408a"/><circle cx="893.9" cy="831.9" r="2.4" fill="#39408a"/><circle cx="895.8" cy="799.3" r="2.4" fill="#39408a"/><circle cx="897.8" cy="770.8" r="2.4" fill="#39408a"/><circle cx="899.7" cy="792.7" r="2.4" fill="#39408a"/><circle cx="901.7" cy="734.0" r="2.4" fill="#39408a"/><circle cx="903.6" cy="836.3" r="2.4" fill="#39408a"/><circle cx="905.5" cy="806.3" r="2.4" fill="#39408a"/><circle cx="907.5" cy="835.8" r="2.4" fill="#39408a"/><circle cx="909.4" cy="789.2" r="2.4" fill="#39408a"/><circle cx="911.4" cy="705.1" r="2.4" fill="#39408a"/><circle cx="913.3" cy="748.7" r="2.4" fill="#39408a"/><circle cx="915.2" cy="760.7" r="2.4" fill="#39408a"/><circle cx="917.2" cy="697.2" r="2.4" fill="#39408a"/><circle cx="919.1" cy="739.9" r="2.4" fill="#39408a"/><circle cx="921.1" cy="737.7" r="2.4" fill="#39408a"/><circle cx="923.0" cy="813.9" r="2.4" fill="#39408a"/><circle cx="924.9" cy="834.5" r="2.4" fill="#39408a"/><circle cx="926.9" cy="829.7" r="2.4" fill="#39408a"/><circle cx="928.8" cy="818.7" r="2.4" fill="#39408a"/><circle cx="930.8" cy="814.4" r="2.4" fill="#39408a"/><circle cx="932.7" cy="776.0" r="2.4" fill="#39408a"/><circle cx="934.6" cy="733.6" r="2.4" fill="#39408a"/><circle cx="936.6" cy="813.3" r="2.4" fill="#39408a"/><circle cx="938.5" cy="742.8" r="2.4" fill="#39408a"/><circle cx="940.5" cy="820.5" r="2.4" fill="#39408a"/><circle cx="942.4" cy="780.4" r="2.4" fill="#39408a"/><circle cx="944.3" cy="815.5" r="2.4" fill="#39408a"/><circle cx="946.3" cy="808.9" r="2.4" fill="#39408a"/><circle cx="948.2" cy="826.4" r="2.4" fill="#39408a"/><circle cx="950.2" cy="808.9" r="2.4" fill="#39408a"/><circle cx="952.1" cy="817.2" r="2.4" fill="#39408a"/><circle cx="954.0" cy="847.9" r="2.4" fill="#39408a"/><circle cx="956.0" cy="672.7" r="2.4" fill="#39408a"/><circle cx="957.9" cy="808.9" r="2.4" fill="#39408a"/><circle cx="959.9" cy="800.8" r="2.4" fill="#39408a"/><circle cx="961.8" cy="748.7" r="2.4" fill="#39408a"/><circle cx="963.7" cy="783.3" r="2.4" fill="#39408a"/><circle cx="965.7" cy="737.7" r="2.4" fill="#39408a"/><circle cx="967.6" cy="757.4" r="2.4" fill="#39408a"/><circle cx="969.5" cy="799.0" r="2.4" fill="#39408a"/><circle cx="971.5" cy="810.0" r="2.4" fill="#39408a"/><circle cx="973.4" cy="757.4" r="2.4" fill="#39408a"/><circle cx="975.4" cy="797.3" r="2.4" fill="#39408a"/><circle cx="977.3" cy="801.9" r="2.4" fill="#39408a"/><circle cx="979.2" cy="810.0" r="2.4" fill="#39408a"/><circle cx="981.2" cy="835.2" r="2.4" fill="#39408a"/><circle cx="983.1" cy="784.8" r="2.4" fill="#39408a"/><circle cx="985.1" cy="827.5" r="2.4" fill="#39408a"/><circle cx="987.0" cy="811.1" r="2.4" fill="#39408a"/><circle cx="988.9" cy="845.0" r="2.4" fill="#39408a"/><circle cx="990.9" cy="793.6" r="2.4" fill="#39408a"/><circle cx="992.8" cy="798.4" r="2.4" fill="#39408a"/><circle cx="994.8" cy="821.4" r="2.4" fill="#39408a"/><circle cx="996.7" cy="770.6" r="2.4" fill="#39408a"/><circle cx="998.6" cy="772.8" r="2.4" fill="#39408a"/><circle cx="1000.6" cy="817.2" r="2.4" fill="#39408a"/><circle cx="1002.5" cy="841.7" r="2.4" fill="#39408a"/><circle cx="1004.5" cy="767.9" r="2.4" fill="#39408a"/><circle cx="1006.4" cy="790.9" r="2.4" fill="#39408a"/><circle cx="1008.3" cy="817.7" r="2.4" fill="#39408a"/><circle cx="1010.3" cy="812.2" r="2.4" fill="#39408a"/><circle cx="1012.2" cy="817.2" r="2.4" fill="#39408a"/><circle cx="1014.2" cy="848.3" r="2.4" fill="#39408a"/><circle cx="1016.1" cy="762.5" r="2.4" fill="#39408a"/><circle cx="1018.0" cy="797.9" r="2.4" fill="#39408a"/><circle cx="1020.0" cy="826.4" r="2.4" fill="#39408a"/><circle cx="1021.9" cy="789.8" r="2.4" fill="#39408a"/><circle cx="1023.9" cy="812.2" r="2.4" fill="#39408a"/><circle cx="1025.8" cy="835.8" r="2.4" fill="#39408a"/><circle cx="1027.7" cy="852.7" r="2.4" fill="#39408a"/><circle cx="1029.7" cy="801.9" r="2.4" fill="#39408a"/><circle cx="1031.6" cy="799.0" r="2.4" fill="#39408a"/><circle cx="1033.6" cy="805.0" r="2.4" fill="#39408a"/><circle cx="1035.5" cy="795.8" r="2.4" fill="#39408a"/><circle cx="1037.4" cy="786.6" r="2.4" fill="#39408a"/><circle cx="1039.4" cy="826.4" r="2.4" fill="#39408a"/><circle cx="1041.3" cy="797.5" r="2.4" fill="#39408a"/><circle cx="1043.3" cy="788.7" r="2.4" fill="#39408a"/><circle cx="1045.2" cy="833.6" r="2.4" fill="#39408a"/><circle cx="1047.1" cy="780.4" r="2.4" fill="#39408a"/><circle cx="1049.1" cy="829.7" r="2.4" fill="#39408a"/><circle cx="1051.0" cy="807.4" r="2.4" fill="#39408a"/><circle cx="1053.0" cy="823.1" r="2.4" fill="#39408a"/><circle cx="1054.9" cy="833.0" r="2.4" fill="#39408a"/><circle cx="1056.8" cy="775.0" r="2.4" fill="#39408a"/><circle cx="1058.8" cy="823.8" r="2.4" fill="#39408a"/><circle cx="1060.7" cy="779.3" r="2.4" fill="#39408a"/><circle cx="1062.7" cy="807.8" r="2.4" fill="#39408a"/><circle cx="1064.6" cy="766.2" r="2.4" fill="#39408a"/><circle cx="1066.5" cy="753.7" r="2.4" fill="#39408a"/><circle cx="1068.5" cy="801.2" r="2.4" fill="#39408a"/><circle cx="1070.4" cy="826.4" r="2.4" fill="#39408a"/><circle cx="1072.4" cy="787.0" r="2.4" fill="#39408a"/><circle cx="1074.3" cy="796.4" r="2.4" fill="#39408a"/><circle cx="1076.2" cy="801.2" r="2.4" fill="#39408a"/><circle cx="1078.2" cy="819.8" r="2.4" fill="#39408a"/><circle cx="1080.1" cy="806.3" r="2.4" fill="#39408a"/><circle cx="1082.1" cy="742.5" r="2.4" fill="#39408a"/><circle cx="1084.0" cy="818.3" r="2.4" fill="#39408a"/><circle cx="1085.9" cy="824.2" r="2.4" fill="#39408a"/><circle cx="1087.9" cy="780.4" r="2.4" fill="#39408a"/><circle cx="1089.8" cy="764.0" r="2.4" fill="#39408a"/><circle cx="1091.8" cy="781.5" r="2.4" fill="#39408a"/><circle cx="1093.7" cy="746.1" r="2.4" fill="#39408a"/><circle cx="1095.6" cy="773.9" r="2.4" fill="#39408a"/><circle cx="1097.6" cy="814.4" r="2.4" fill="#39408a"/><circle cx="1099.5" cy="750.9" r="2.4" fill="#39408a"/><circle cx="1101.5" cy="816.6" r="2.4" fill="#39408a"/><circle cx="1103.4" cy="805.6" r="2.4" fill="#39408a"/><circle cx="1105.3" cy="817.2" r="2.4" fill="#39408a"/><circle cx="1107.3" cy="732.9" r="2.4" fill="#39408a"/><circle cx="1109.2" cy="780.4" r="2.4" fill="#39408a"/><circle cx="1111.2" cy="747.1" r="2.4" fill="#39408a"/><circle cx="1113.1" cy="730.1" r="2.4" fill="#39408a"/><circle cx="1115.0" cy="757.4" r="2.4" fill="#39408a"/><circle cx="1117.0" cy="819.8" r="2.4" fill="#39408a"/><circle cx="1118.9" cy="783.1" r="2.4" fill="#39408a"/><circle cx="1120.9" cy="719.1" r="2.4" fill="#39408a"/><circle cx="1122.8" cy="800.8" r="2.4" fill="#39408a"/><circle cx="1124.7" cy="805.6" r="2.4" fill="#39408a"/><circle cx="1126.7" cy="809.6" r="2.4" fill="#39408a"/><circle cx="1128.6" cy="838.5" r="2.4" fill="#39408a"/><circle cx="1130.6" cy="650.6" r="2.4" fill="#39408a"/><circle cx="1132.5" cy="755.7" r="2.4" fill="#39408a"/><circle cx="1134.4" cy="834.1" r="2.4" fill="#39408a"/><circle cx="1136.4" cy="847.2" r="2.4" fill="#39408a"/><circle cx="1138.3" cy="828.6" r="2.4" fill="#39408a"/><circle cx="1140.3" cy="824.2" r="2.4" fill="#39408a"/><circle cx="1142.2" cy="782.2" r="2.4" fill="#39408a"/><circle cx="1144.1" cy="738.4" r="2.4" fill="#39408a"/><circle cx="1146.1" cy="787.7" r="2.4" fill="#39408a"/><circle cx="1148.0" cy="775.0" r="2.4" fill="#39408a"/><circle cx="1150.0" cy="816.1" r="2.4" fill="#39408a"/><circle cx="1151.9" cy="856.6" r="2.4" fill="#39408a"/><circle cx="1153.8" cy="833.0" r="2.4" fill="#39408a"/><circle cx="1155.8" cy="792.9" r="2.4" fill="#39408a"/><circle cx="1157.7" cy="754.2" r="2.4" fill="#39408a"/><circle cx="1159.6" cy="767.3" r="2.4" fill="#39408a"/><circle cx="1161.6" cy="794.2" r="2.4" fill="#39408a"/><circle cx="1163.5" cy="835.8" r="2.4" fill="#39408a"/><circle cx="1165.5" cy="800.1" r="2.4" fill="#39408a"/><circle cx="1167.4" cy="779.3" r="2.4" fill="#39408a"/><circle cx="1169.3" cy="782.6" r="2.4" fill="#39408a"/><circle cx="1171.3" cy="782.6" r="2.4" fill="#39408a"/><circle cx="1173.2" cy="730.5" r="2.4" fill="#39408a"/><circle cx="1175.2" cy="787.4" r="2.4" fill="#39408a"/><circle cx="1177.1" cy="722.0" r="2.4" fill="#39408a"/><circle cx="1179.0" cy="669.9" r="2.4" fill="#39408a"/><circle cx="1181.0" cy="621.7" r="2.4" fill="#39408a"/><circle cx="1182.9" cy="765.8" r="2.4" fill="#39408a"/><circle cx="1184.9" cy="819.8" r="2.4" fill="#39408a"/><circle cx="1186.8" cy="808.9" r="2.4" fill="#39408a"/><circle cx="1188.7" cy="729.6" r="2.4" fill="#39408a"/><circle cx="1190.7" cy="795.3" r="2.4" fill="#39408a"/><circle cx="1192.6" cy="836.3" r="2.4" fill="#39408a"/><circle cx="1194.6" cy="823.1" r="2.4" fill="#39408a"/><circle cx="1196.5" cy="706.6" r="2.4" fill="#39408a"/><circle cx="1198.4" cy="762.5" r="2.4" fill="#39408a"/><circle cx="1200.4" cy="735.5" r="2.4" fill="#39408a"/><circle cx="1202.3" cy="787.7" r="2.4" fill="#39408a"/><circle cx="1204.3" cy="727.4" r="2.4" fill="#39408a"/><circle cx="1206.2" cy="796.2" r="2.4" fill="#39408a"/><circle cx="1208.1" cy="776.7" r="2.4" fill="#39408a"/><circle cx="1210.1" cy="829.3" r="2.4" fill="#39408a"/><circle cx="1212.0" cy="793.6" r="2.4" fill="#39408a"/><circle cx="1214.0" cy="801.2" r="2.4" fill="#39408a"/><circle cx="1215.9" cy="782.0" r="2.4" fill="#39408a"/><circle cx="1217.8" cy="777.1" r="2.4" fill="#39408a"/><circle cx="1219.8" cy="765.1" r="2.4" fill="#39408a"/><circle cx="1221.7" cy="823.1" r="2.4" fill="#39408a"/><circle cx="1223.7" cy="755.2" r="2.4" fill="#39408a"/><circle cx="1225.6" cy="685.8" r="2.4" fill="#39408a"/><circle cx="1227.5" cy="745.0" r="2.4" fill="#39408a"/><circle cx="1229.5" cy="808.9" r="2.4" fill="#39408a"/><circle cx="1231.4" cy="718.0" r="2.4" fill="#39408a"/><circle cx="1233.4" cy="775.6" r="2.4" fill="#39408a"/><circle cx="1235.3" cy="800.8" r="2.4" fill="#39408a"/><circle cx="1237.2" cy="812.2" r="2.4" fill="#39408a"/><circle cx="1239.2" cy="778.2" r="2.4" fill="#39408a"/><circle cx="1241.1" cy="832.5" r="2.4" fill="#39408a"/><circle cx="1243.1" cy="793.6" r="2.4" fill="#39408a"/><circle cx="1245.0" cy="786.3" r="2.4" fill="#39408a"/><circle cx="1246.9" cy="832.5" r="2.4" fill="#39408a"/><circle cx="1248.9" cy="824.2" r="2.4" fill="#39408a"/><circle cx="1250.8" cy="773.9" r="2.4" fill="#39408a"/><circle cx="1252.8" cy="842.8" r="2.4" fill="#39408a"/><circle cx="1254.7" cy="790.9" r="2.4" fill="#39408a"/><circle cx="1256.6" cy="727.9" r="2.4" fill="#39408a"/><circle cx="1258.6" cy="751.5" r="2.4" fill="#39408a"/><circle cx="1260.5" cy="731.8" r="2.4" fill="#39408a"/><circle cx="1262.5" cy="770.1" r="2.4" fill="#39408a"/><circle cx="1264.4" cy="772.8" r="2.4" fill="#39408a"/><circle cx="1266.3" cy="752.6" r="2.4" fill="#39408a"/><circle cx="1268.3" cy="777.1" r="2.4" fill="#39408a"/><circle cx="1270.2" cy="707.1" r="2.4" fill="#39408a"/><circle cx="1272.2" cy="743.9" r="2.4" fill="#39408a"/><circle cx="1274.1" cy="823.1" r="2.4" fill="#39408a"/><circle cx="1276.0" cy="760.3" r="2.4" fill="#39408a"/><circle cx="1278.0" cy="804.5" r="2.4" fill="#39408a"/><circle cx="1279.9" cy="779.3" r="2.4" fill="#39408a"/><circle cx="1281.9" cy="752.6" r="2.4" fill="#39408a"/><circle cx="1283.8" cy="788.7" r="2.4" fill="#39408a"/><circle cx="1285.7" cy="829.7" r="2.4" fill="#39408a"/><circle cx="1287.7" cy="784.4" r="2.4" fill="#39408a"/><circle cx="1289.6" cy="817.2" r="2.4" fill="#39408a"/><circle cx="1291.6" cy="766.9" r="2.4" fill="#39408a"/><circle cx="1293.5" cy="767.9" r="2.4" fill="#39408a"/><circle cx="1295.4" cy="822.5" r="2.4" fill="#39408a"/><circle cx="1297.4" cy="835.8" r="2.4" fill="#39408a"/><circle cx="1299.3" cy="814.8" r="2.4" fill="#39408a"/><circle cx="1301.3" cy="760.7" r="2.4" fill="#39408a"/><circle cx="1303.2" cy="784.4" r="2.4" fill="#39408a"/><circle cx="1305.1" cy="764.7" r="2.4" fill="#39408a"/><circle cx="1307.1" cy="823.1" r="2.4" fill="#39408a"/><circle cx="1309.0" cy="787.0" r="2.4" fill="#39408a"/><circle cx="1311.0" cy="827.5" r="2.4" fill="#39408a"/><circle cx="1312.9" cy="834.1" r="2.4" fill="#39408a"/><circle cx="1314.8" cy="841.7" r="2.4" fill="#39408a"/><circle cx="1316.8" cy="765.8" r="2.4" fill="#39408a"/><circle cx="1318.7" cy="767.3" r="2.4" fill="#39408a"/><circle cx="1320.7" cy="762.5" r="2.4" fill="#39408a"/><circle cx="1322.6" cy="836.3" r="2.4" fill="#39408a"/><circle cx="1324.5" cy="805.6" r="2.4" fill="#39408a"/><circle cx="1326.5" cy="746.1" r="2.4" fill="#39408a"/><circle cx="1328.4" cy="829.3" r="2.4" fill="#39408a"/><circle cx="1330.4" cy="802.3" r="2.4" fill="#39408a"/><circle cx="1332.3" cy="833.0" r="2.4" fill="#39408a"/><circle cx="1334.2" cy="813.9" r="2.4" fill="#39408a"/><circle cx="1336.2" cy="739.5" r="2.4" fill="#39408a"/><circle cx="1338.1" cy="819.8" r="2.4" fill="#39408a"/><circle cx="1340.1" cy="826.4" r="2.4" fill="#39408a"/><circle cx="1342.0" cy="797.9" r="2.4" fill="#39408a"/><circle cx="1343.9" cy="817.2" r="2.4" fill="#39408a"/><circle cx="1345.9" cy="817.7" r="2.4" fill="#39408a"/><circle cx="1347.8" cy="831.9" r="2.4" fill="#39408a"/><circle cx="1349.8" cy="786.3" r="2.4" fill="#39408a"/><circle cx="1351.7" cy="704.9" r="2.4" fill="#39408a"/><circle cx="1353.6" cy="779.8" r="2.4" fill="#39408a"/><circle cx="1355.6" cy="746.9" r="2.4" fill="#39408a"/><circle cx="1357.5" cy="796.9" r="2.4" fill="#39408a"/><circle cx="1359.4" cy="816.1" r="2.4" fill="#39408a"/><circle cx="1361.4" cy="787.0" r="2.4" fill="#39408a"/><circle cx="1363.3" cy="856.0" r="2.4" fill="#39408a"/><circle cx="1365.3" cy="714.7" r="2.4" fill="#39408a"/><circle cx="1367.2" cy="797.9" r="2.4" fill="#39408a"/><circle cx="1369.1" cy="797.9" r="2.4" fill="#39408a"/><circle cx="1371.1" cy="691.3" r="2.4" fill="#39408a"/><circle cx="1373.0" cy="728.3" r="2.4" fill="#39408a"/><circle cx="1375.0" cy="796.9" r="2.4" fill="#39408a"/><circle cx="1376.9" cy="582.0" r="2.4" fill="#39408a"/><circle cx="1378.8" cy="680.1" r="2.4" fill="#39408a"/><circle cx="1380.8" cy="844.6" r="2.4" fill="#39408a"/><circle cx="1382.7" cy="833.0" r="2.4" fill="#39408a"/><circle cx="1384.7" cy="753.7" r="2.4" fill="#39408a"/><circle cx="1386.6" cy="830.8" r="2.4" fill="#39408a"/><circle cx="1388.5" cy="832.3" r="2.4" fill="#39408a"/><circle cx="1390.5" cy="760.1" r="2.4" fill="#39408a"/><circle cx="1392.4" cy="816.1" r="2.4" fill="#39408a"/><circle cx="1394.4" cy="811.1" r="2.4" fill="#39408a"/><circle cx="1396.3" cy="822.7" r="2.4" fill="#39408a"/><circle cx="1398.2" cy="796.2" r="2.4" fill="#39408a"/><circle cx="1400.2" cy="810.0" r="2.4" fill="#39408a"/><circle cx="1402.1" cy="825.8" r="2.4" fill="#39408a"/><circle cx="1404.1" cy="800.8" r="2.4" fill="#39408a"/><circle cx="1406.0" cy="795.8" r="2.4" fill="#39408a"/><circle cx="1407.9" cy="799.0" r="2.4" fill="#39408a"/><circle cx="1409.9" cy="740.4" r="2.4" fill="#39408a"/><circle cx="1411.8" cy="799.7" r="2.4" fill="#39408a"/><circle cx="1413.8" cy="835.8" r="2.4" fill="#39408a"/><circle cx="1415.7" cy="790.3" r="2.4" fill="#39408a"/><circle cx="1417.6" cy="796.9" r="2.4" fill="#39408a"/><circle cx="1419.6" cy="767.9" r="2.4" fill="#39408a"/><circle cx="1421.5" cy="748.7" r="2.4" fill="#39408a"/><circle cx="1423.5" cy="808.2" r="2.4" fill="#39408a"/><circle cx="1425.4" cy="787.7" r="2.4" fill="#39408a"/><circle cx="1427.3" cy="850.5" r="2.4" fill="#39408a"/><circle cx="1429.3" cy="726.3" r="2.4" fill="#39408a"/><circle cx="1431.2" cy="745.0" r="2.4" fill="#39408a"/><circle cx="1433.2" cy="772.1" r="2.4" fill="#39408a"/><circle cx="1435.1" cy="738.4" r="2.4" fill="#39408a"/><circle cx="1437.0" cy="777.6" r="2.4" fill="#39408a"/><circle cx="1439.0" cy="823.1" r="2.4" fill="#39408a"/><circle cx="1440.9" cy="735.5" r="2.4" fill="#39408a"/><circle cx="1442.9" cy="767.3" r="2.4" fill="#39408a"/><circle cx="1444.8" cy="729.4" r="2.4" fill="#39408a"/><circle cx="1446.7" cy="731.2" r="2.4" fill="#39408a"/><circle cx="1448.7" cy="772.1" r="2.4" fill="#39408a"/><circle cx="1450.6" cy="767.3" r="2.4" fill="#39408a"/><circle cx="1452.6" cy="669.9" r="2.4" fill="#39408a"/><circle cx="1454.5" cy="748.7" r="2.4" fill="#39408a"/><circle cx="1456.4" cy="762.5" r="2.4" fill="#39408a"/><circle cx="1458.4" cy="800.8" r="2.4" fill="#39408a"/><circle cx="1460.3" cy="822.0" r="2.4" fill="#39408a"/><circle cx="1462.3" cy="800.1" r="2.4" fill="#39408a"/><circle cx="1464.2" cy="796.2" r="2.4" fill="#39408a"/><circle cx="1466.1" cy="755.2" r="2.4" fill="#39408a"/><circle cx="1468.1" cy="803.4" r="2.4" fill="#39408a"/><circle cx="1470.0" cy="799.5" r="2.4" fill="#39408a"/><circle cx="1472.0" cy="819.8" r="2.4" fill="#39408a"/><circle cx="1473.9" cy="807.1" r="2.4" fill="#39408a"/><circle cx="1475.8" cy="827.5" r="2.4" fill="#39408a"/><circle cx="1477.8" cy="780.4" r="2.4" fill="#39408a"/><circle cx="1479.7" cy="835.8" r="2.4" fill="#39408a"/><circle cx="1481.7" cy="658.9" r="2.4" fill="#39408a"/><circle cx="1483.6" cy="743.2" r="2.4" fill="#39408a"/><circle cx="1485.5" cy="779.3" r="2.4" fill="#39408a"/><circle cx="1487.5" cy="803.0" r="2.4" fill="#39408a"/><circle cx="1489.4" cy="759.2" r="2.4" fill="#39408a"/><circle cx="1491.4" cy="806.7" r="2.4" fill="#39408a"/><circle cx="1493.3" cy="812.2" r="2.4" fill="#39408a"/><circle cx="1495.2" cy="765.8" r="2.4" fill="#39408a"/><circle cx="1497.2" cy="680.1" r="2.4" fill="#39408a"/><circle cx="1499.1" cy="729.6" r="2.4" fill="#39408a"/><circle cx="1501.1" cy="783.7" r="2.4" fill="#39408a"/><circle cx="1503.0" cy="817.2" r="2.4" fill="#39408a"/><circle cx="1504.9" cy="828.2" r="2.4" fill="#39408a"/><circle cx="1506.9" cy="792.5" r="2.4" fill="#39408a"/><circle cx="1508.8" cy="833.0" r="2.4" fill="#39408a"/><circle cx="1510.8" cy="789.2" r="2.4" fill="#39408a"/><circle cx="1512.7" cy="771.2" r="2.4" fill="#39408a"/><circle cx="1514.6" cy="841.7" r="2.4" fill="#39408a"/><circle cx="1516.6" cy="801.2" r="2.4" fill="#39408a"/><circle cx="1518.5" cy="815.9" r="2.4" fill="#39408a"/><circle cx="1520.5" cy="812.2" r="2.4" fill="#39408a"/><circle cx="1522.4" cy="793.1" r="2.4" fill="#39408a"/><circle cx="1524.3" cy="814.4" r="2.4" fill="#39408a"/><circle cx="1526.3" cy="826.0" r="2.4" fill="#39408a"/><circle cx="1528.2" cy="765.5" r="2.4" fill="#39408a"/><circle cx="1530.2" cy="796.9" r="2.4" fill="#39408a"/><circle cx="1532.1" cy="765.5" r="2.4" fill="#39408a"/><circle cx="1534.0" cy="761.4" r="2.4" fill="#39408a"/><circle cx="1536.0" cy="765.8" r="2.4" fill="#39408a"/><circle cx="1537.9" cy="790.3" r="2.4" fill="#39408a"/><circle cx="1539.9" cy="811.1" r="2.4" fill="#39408a"/><circle cx="1541.8" cy="828.6" r="2.4" fill="#39408a"/><circle cx="1543.7" cy="816.6" r="2.4" fill="#39408a"/><circle cx="1545.7" cy="820.9" r="2.4" fill="#39408a"/><circle cx="1547.6" cy="776.0" r="2.4" fill="#39408a"/><circle cx="1549.5" cy="769.0" r="2.4" fill="#39408a"/><circle cx="1551.5" cy="797.5" r="2.4" fill="#39408a"/><circle cx="1553.4" cy="775.0" r="2.4" fill="#39408a"/><circle cx="1555.4" cy="753.1" r="2.4" fill="#39408a"/><circle cx="1557.3" cy="746.5" r="2.4" fill="#39408a"/><circle cx="1559.2" cy="796.9" r="2.4" fill="#39408a"/><circle cx="1561.2" cy="814.4" r="2.4" fill="#39408a"/><polyline fill="none" stroke="#45bfb5" stroke-width="1.8" points="864.8,866.0 866.7,866.0 868.7,866.0 870.6,866.0 872.6,866.0 874.5,866.0 876.4,850.9 878.4,866.0 880.3,866.0 882.3,866.0 884.2,866.0 886.1,850.9 888.1,866.0 890.0,866.0 892.0,866.0 893.9,866.0 895.8,866.0 897.8,866.0 899.7,866.0 901.7,866.0 903.6,866.0 905.5,866.0 907.5,866.0 909.4,866.0 911.4,866.0 913.3,866.0 915.2,866.0 917.2,866.0 919.1,866.0 921.1,866.0 923.0,866.0 924.9,866.0 926.9,866.0 928.8,866.0 930.8,866.0 932.7,808.0 934.6,850.9 936.6,866.0 938.5,866.0 940.5,866.0 942.4,866.0 944.3,866.0 946.3,866.0 948.2,866.0 950.2,866.0 952.1,866.0 954.0,866.0 956.0,835.2 957.9,866.0 959.9,866.0 961.8,866.0 963.7,866.0 965.7,866.0 967.6,866.0 969.5,866.0 971.5,866.0 973.4,866.0 975.4,866.0 977.3,866.0 979.2,866.0 981.2,866.0 983.1,866.0 985.1,850.9 987.0,866.0 988.9,866.0 990.9,866.0 992.8,866.0 994.8,866.0 996.7,866.0 998.6,866.0 1000.6,866.0 1002.5,866.0 1004.5,866.0 1006.4,866.0 1008.3,804.5 1010.3,866.0 1012.2,850.9 1014.2,866.0 1016.1,866.0 1018.0,866.0 1020.0,866.0 1021.9,866.0 1023.9,866.0 1025.8,866.0 1027.7,866.0 1029.7,866.0 1031.6,866.0 1033.6,866.0 1035.5,866.0 1037.4,866.0 1039.4,866.0 1041.3,866.0 1043.3,866.0 1045.2,866.0 1047.1,866.0 1049.1,866.0 1051.0,866.0 1053.0,866.0 1054.9,866.0 1056.8,866.0 1058.8,866.0 1060.7,866.0 1062.7,866.0 1064.6,866.0 1066.5,866.0 1068.5,866.0 1070.4,866.0 1072.4,866.0 1074.3,866.0 1076.2,866.0 1078.2,850.9 1080.1,866.0 1082.1,866.0 1084.0,866.0 1085.9,866.0 1087.9,850.9 1089.8,866.0 1091.8,866.0 1093.7,866.0 1095.6,866.0 1097.6,866.0 1099.5,866.0 1101.5,866.0 1103.4,866.0 1105.3,866.0 1107.3,866.0 1109.2,866.0 1111.2,866.0 1113.1,866.0 1115.0,866.0 1117.0,866.0 1118.9,866.0 1120.9,866.0 1122.8,866.0 1124.7,866.0 1126.7,866.0 1128.6,866.0 1130.6,866.0 1132.5,866.0 1134.4,866.0 1136.4,866.0 1138.3,866.0 1140.3,866.0 1142.2,866.0 1144.1,866.0 1146.1,866.0 1148.0,866.0 1150.0,866.0 1151.9,866.0 1153.8,866.0 1155.8,866.0 1157.7,851.8 1159.6,866.0 1161.6,866.0 1163.5,866.0 1165.5,866.0 1167.4,866.0 1169.3,866.0 1171.3,866.0 1173.2,866.0 1175.2,866.0 1177.1,866.0 1179.0,866.0 1181.0,820.3 1182.9,866.0 1184.9,866.0 1186.8,866.0 1188.7,866.0 1190.7,866.0 1192.6,866.0 1194.6,866.0 1196.5,866.0 1198.4,866.0 1200.4,866.0 1202.3,866.0 1204.3,866.0 1206.2,866.0 1208.1,866.0 1210.1,866.0 1212.0,866.0 1214.0,866.0 1215.9,866.0 1217.8,850.9 1219.8,866.0 1221.7,866.0 1223.7,851.8 1225.6,866.0 1227.5,866.0 1229.5,835.2 1231.4,866.0 1233.4,866.0 1235.3,866.0 1237.2,866.0 1239.2,866.0 1241.1,866.0 1243.1,866.0 1245.0,866.0 1246.9,866.0 1248.9,866.0 1250.8,866.0 1252.8,866.0 1254.7,866.0 1256.6,835.2 1258.6,866.0 1260.5,866.0 1262.5,866.0 1264.4,866.0 1266.3,866.0 1268.3,866.0 1270.2,866.0 1272.2,820.3 1274.1,866.0 1276.0,866.0 1278.0,866.0 1279.9,866.0 1281.9,866.0 1283.8,866.0 1285.7,866.0 1287.7,866.0 1289.6,866.0 1291.6,866.0 1293.5,866.0 1295.4,866.0 1297.4,866.0 1299.3,866.0 1301.3,866.0 1303.2,866.0 1305.1,866.0 1307.1,866.0 1309.0,866.0 1311.0,866.0 1312.9,866.0 1314.8,866.0 1316.8,866.0 1318.7,866.0 1320.7,866.0 1322.6,866.0 1324.5,866.0 1326.5,866.0 1328.4,866.0 1330.4,866.0 1332.3,866.0 1334.2,866.0 1336.2,866.0 1338.1,866.0 1340.1,866.0 1342.0,866.0 1343.9,866.0 1345.9,866.0 1347.8,866.0 1349.8,866.0 1351.7,866.0 1353.6,866.0 1355.6,866.0 1357.5,850.9 1359.4,866.0 1361.4,835.2 1363.3,866.0 1365.3,866.0 1367.2,866.0 1369.1,866.0 1371.1,866.0 1373.0,866.0 1375.0,866.0 1376.9,866.0 1378.8,866.0 1380.8,866.0 1382.7,866.0 1384.7,866.0 1386.6,866.0 1388.5,866.0 1390.5,866.0 1392.4,866.0 1394.4,866.0 1396.3,866.0 1398.2,866.0 1400.2,866.0 1402.1,866.0 1404.1,850.9 1406.0,866.0 1407.9,866.0 1409.9,866.0 1411.8,866.0 1413.8,866.0 1415.7,835.2 1417.6,851.8 1419.6,866.0 1421.5,866.0 1423.5,866.0 1425.4,866.0 1427.3,866.0 1429.3,866.0 1431.2,866.0 1433.2,866.0 1435.1,866.0 1437.0,866.0 1439.0,866.0 1440.9,866.0 1442.9,866.0 1444.8,866.0 1446.7,866.0 1448.7,866.0 1450.6,866.0 1452.6,866.0 1454.5,866.0 1456.4,866.0 1458.4,866.0 1460.3,866.0 1462.3,866.0 1464.2,866.0 1466.1,866.0 1468.1,866.0 1470.0,866.0 1472.0,866.0 1473.9,866.0 1475.8,866.0 1477.8,866.0 1479.7,866.0 1481.7,866.0 1483.6,866.0 1485.5,866.0 1487.5,866.0 1489.4,866.0 1491.4,866.0 1493.3,866.0 1495.2,866.0 1497.2,866.0 1499.1,866.0 1501.1,866.0 1503.0,866.0 1504.9,866.0 1506.9,866.0 1508.8,866.0 1510.8,866.0 1512.7,866.0 1514.6,866.0 1516.6,866.0 1518.5,866.0 1520.5,866.0 1522.4,866.0 1524.3,866.0 1526.3,866.0 1528.2,866.0 1530.2,866.0 1532.1,866.0 1534.0,866.0 1536.0,866.0 1537.9,866.0 1539.9,866.0 1541.8,866.0 1543.7,866.0 1545.7,866.0 1547.6,866.0 1549.5,866.0 1551.5,866.0 1553.4,804.5 1555.4,866.0 1557.3,866.0 1559.2,866.0 1561.2,866.0"/><line x1="864.8" y1="866.0" x2="1561.2" y2="866.0" stroke="#45bfb5" stroke-width="4.2" stroke-linecap="round"/><circle cx="876.4" cy="850.9" r="2.4" fill="#45bfb5"/><circle cx="886.1" cy="850.9" r="2.4" fill="#45bfb5"/><circle cx="932.7" cy="808.0" r="2.4" fill="#45bfb5"/><circle cx="934.6" cy="850.9" r="2.4" fill="#45bfb5"/><circle cx="956.0" cy="835.2" r="2.4" fill="#45bfb5"/><circle cx="985.1" cy="850.9" r="2.4" fill="#45bfb5"/><circle cx="1008.3" cy="804.5" r="2.4" fill="#45bfb5"/><circle cx="1012.2" cy="850.9" r="2.4" fill="#45bfb5"/><circle cx="1078.2" cy="850.9" r="2.4" fill="#45bfb5"/><circle cx="1087.9" cy="850.9" r="2.4" fill="#45bfb5"/><circle cx="1157.7" cy="851.8" r="2.4" fill="#45bfb5"/><circle cx="1181.0" cy="820.3" r="2.4" fill="#45bfb5"/><circle cx="1217.8" cy="850.9" r="2.4" fill="#45bfb5"/><circle cx="1223.7" cy="851.8" r="2.4" fill="#45bfb5"/><circle cx="1229.5" cy="835.2" r="2.4" fill="#45bfb5"/><circle cx="1256.6" cy="835.2" r="2.4" fill="#45bfb5"/><circle cx="1272.2" cy="820.3" r="2.4" fill="#45bfb5"/><circle cx="1357.5" cy="850.9" r="2.4" fill="#45bfb5"/><circle cx="1361.4" cy="835.2" r="2.4" fill="#45bfb5"/><circle cx="1404.1" cy="850.9" r="2.4" fill="#45bfb5"/><circle cx="1415.7" cy="835.2" r="2.4" fill="#45bfb5"/><circle cx="1417.6" cy="851.8" r="2.4" fill="#45bfb5"/><circle cx="1553.4" cy="804.5" r="2.4" fill="#45bfb5"/><rect x="984" y="915" width="33.5" height="11" fill="#45bfb5"/><text x="1021.8" y="924" class="lg">POP Drop Rate</text><rect x="1096" y="915" width="33.5" height="11" fill="#39408a"/><text x="1133.7" y="924" class="lg">POP Latency</text><rect x="1197" y="915" width="33.5" height="11" fill="#ff8c00"/><text x="1234.8" y="924" class="lg">Obstruction Status</text><rect x="1322.3" y="915" width="33.7" height="11" fill="#9a66cc"/><text x="1360" y="924" class="lg">Connection State</text></svg>
</body></html>
